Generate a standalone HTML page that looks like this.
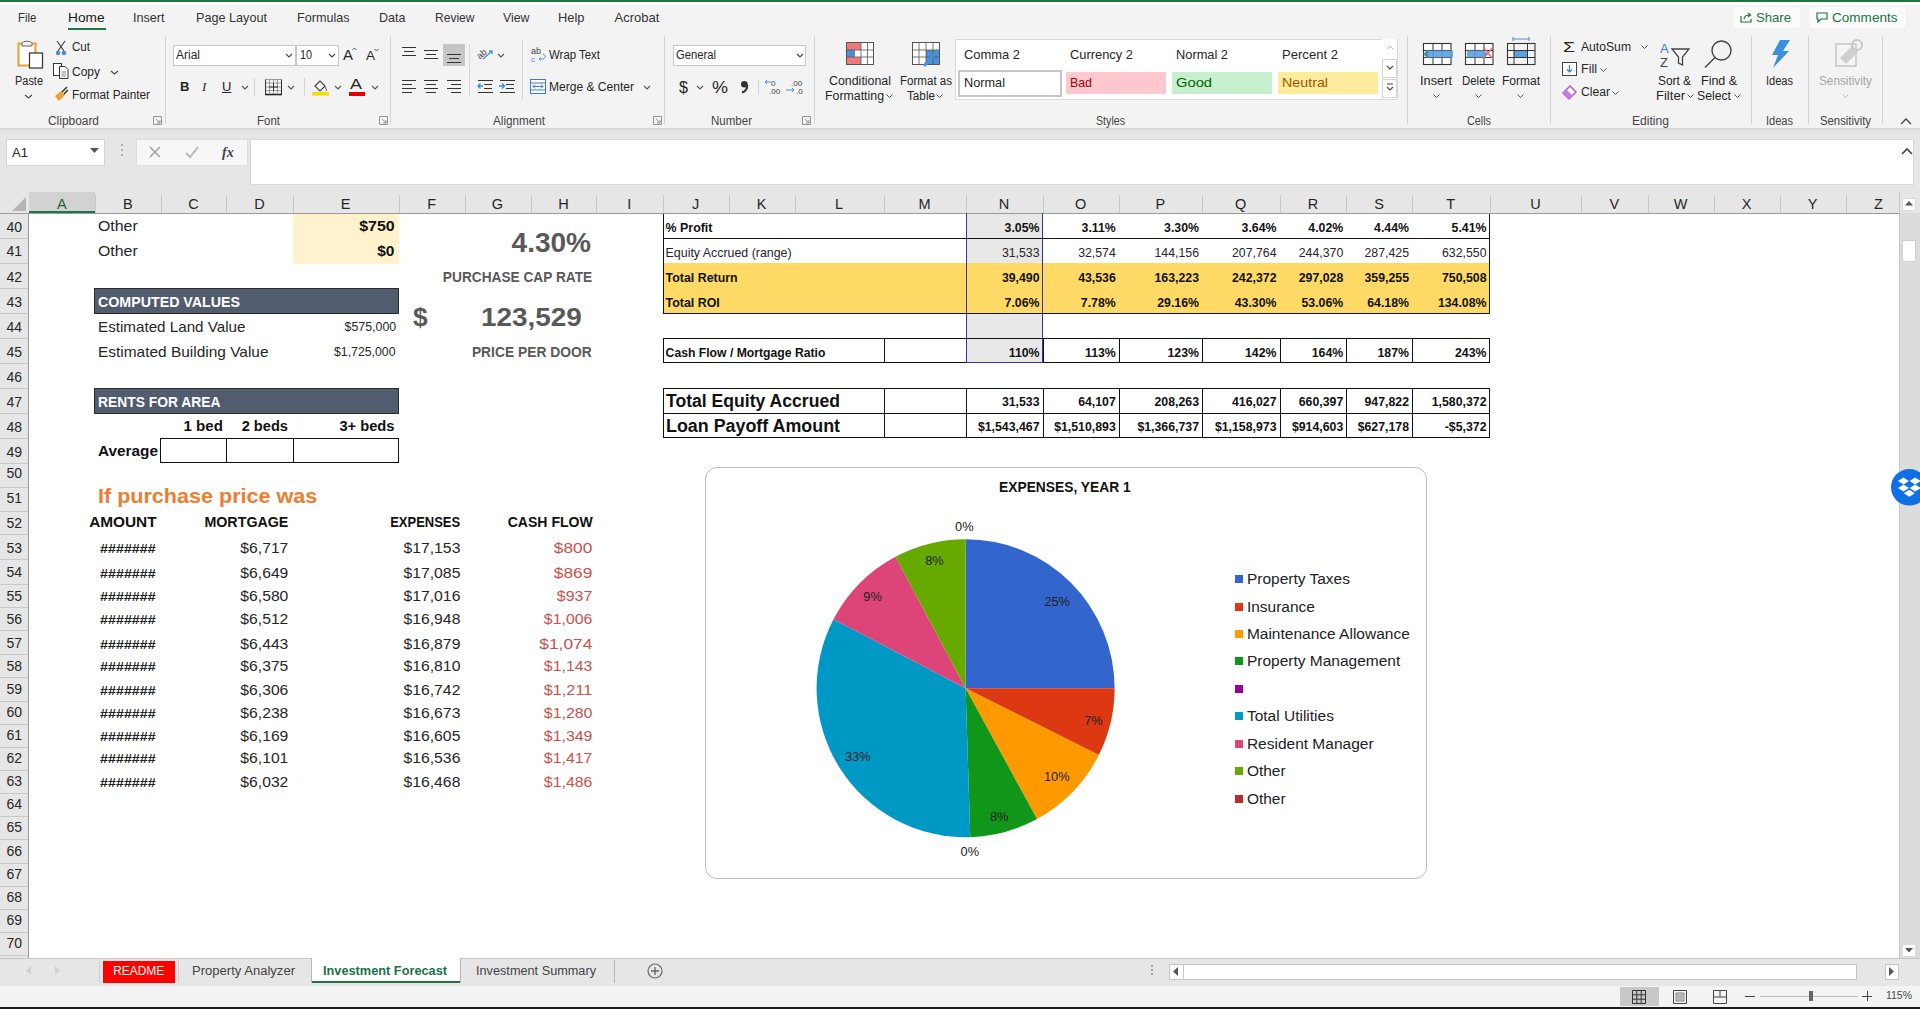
<!DOCTYPE html>
<html><head><meta charset="utf-8"><title>Excel</title>
<style>
html,body{margin:0;padding:0;}
body{width:1920px;height:1009px;position:relative;overflow:hidden;background:#f3f3f3;font-family:"Liberation Sans",sans-serif;}

</style></head><body>
<div style="position:absolute;left:0.00px;top:128.00px;width:1920.00px;height:85.00px;background:#e6e6e6;z-index:1;"></div>
<div style="position:absolute;left:0.00px;top:128.00px;width:1920.00px;height:4.00px;background:linear-gradient(#d6d6d6,#e6e6e6);z-index:1;"></div>
<div style="position:absolute;left:5.50px;top:138.50px;width:99.50px;height:27.00px;background:#fff;border:1px solid #d4d4d4;box-sizing:border-box;z-index:2;"></div>
<div style="position:absolute;left:12.00px;top:145.99px;font:400 13.5px/1 'Liberation Sans',sans-serif;color:#262626;white-space:pre;z-index:5;transform:scaleX(0.9689);transform-origin:left;">A1</div>
<svg style="position:absolute;left:90px;top:148px;z-index:6;overflow:visible" width="10" height="6" viewBox="0 0 10 6"><path d="M0 0 L9 0 L4.5 5 Z" fill="#555"/></svg>
<div style="position:absolute;left:120.50px;top:144.00px;width:2.00px;height:2.00px;background:#b0b0b0;z-index:2;"></div>
<div style="position:absolute;left:120.50px;top:149.00px;width:2.00px;height:2.00px;background:#b0b0b0;z-index:2;"></div>
<div style="position:absolute;left:120.50px;top:154.00px;width:2.00px;height:2.00px;background:#b0b0b0;z-index:2;"></div>
<div style="position:absolute;left:136.00px;top:139.00px;width:112.00px;height:26.50px;background:#f7f7f7;border:1px solid #dedede;box-sizing:border-box;z-index:2;"></div>
<svg style="position:absolute;left:148px;top:145px;z-index:6;overflow:visible" width="14" height="14" viewBox="0 0 14 14"><path d="M2 2 L12 12 M12 2 L2 12" stroke="#a0a0a0" stroke-width="1.5"/></svg>
<svg style="position:absolute;left:184px;top:145px;z-index:6;overflow:visible" width="16" height="14" viewBox="0 0 16 14"><path d="M2 8 L6 12 L14 2" stroke="#b8b8b8" stroke-width="2" fill="none"/></svg>
<div style="position:absolute;left:222.00px;top:145.75px;font:700 14px/1 'Liberation Serif',serif;color:#444;white-space:pre;z-index:5;font-style:italic;">fx</div>
<div style="position:absolute;left:250.00px;top:139.00px;width:1664.00px;height:45.50px;background:#fff;border:1px solid #d8d8d8;box-sizing:border-box;z-index:2;"></div>
<svg style="position:absolute;left:1901px;top:147px;z-index:6;overflow:visible" width="12" height="8" viewBox="0 0 12 8"><path d="M1 7 L6 2 L11 7" stroke="#444" stroke-width="1.6" fill="none"/></svg>
<div style="position:absolute;left:0.00px;top:192.00px;width:1920.00px;height:21.00px;background:#e6e6e6;z-index:2;"></div>
<div style="position:absolute;left:28.50px;top:192.00px;width:66.50px;height:19.00px;background:#d2d2d2;z-index:2;"></div>
<div style="position:absolute;left:28.50px;top:211.00px;width:66.50px;height:2.00px;background:#217346;z-index:4;"></div>
<div style="position:absolute;left:0.00px;top:213.00px;width:1898.75px;height:1.00px;background:#9b9b9b;z-index:4;"></div>
<svg style="position:absolute;left:12px;top:197px;z-index:6;overflow:visible" width="15" height="15" viewBox="0 0 15 15"><path d="M14 0 L14 14 L0 14 Z" fill="#b4b4b4"/></svg>
<div style="position:absolute;left:56.91px;top:197.01px;font:400 14.5px/1 'Liberation Sans',sans-serif;color:#1e5b3a;white-space:pre;z-index:5;">A</div>
<div style="position:absolute;left:95.00px;top:195.00px;width:1.00px;height:18.00px;background:#c8c8c8;z-index:3;"></div>
<div style="position:absolute;left:122.91px;top:197.01px;font:400 14.5px/1 'Liberation Sans',sans-serif;color:#262626;white-space:pre;z-index:5;">B</div>
<div style="position:absolute;left:160.50px;top:195.00px;width:1.00px;height:18.00px;background:#c8c8c8;z-index:3;"></div>
<div style="position:absolute;left:188.14px;top:197.01px;font:400 14.5px/1 'Liberation Sans',sans-serif;color:#262626;white-space:pre;z-index:5;">C</div>
<div style="position:absolute;left:226.25px;top:195.00px;width:1.00px;height:18.00px;background:#c8c8c8;z-index:3;"></div>
<div style="position:absolute;left:254.14px;top:197.01px;font:400 14.5px/1 'Liberation Sans',sans-serif;color:#262626;white-space:pre;z-index:5;">D</div>
<div style="position:absolute;left:292.50px;top:195.00px;width:1.00px;height:18.00px;background:#c8c8c8;z-index:3;"></div>
<div style="position:absolute;left:340.79px;top:197.01px;font:400 14.5px/1 'Liberation Sans',sans-serif;color:#262626;white-space:pre;z-index:5;">E</div>
<div style="position:absolute;left:398.75px;top:195.00px;width:1.00px;height:18.00px;background:#c8c8c8;z-index:3;"></div>
<div style="position:absolute;left:427.20px;top:197.01px;font:400 14.5px/1 'Liberation Sans',sans-serif;color:#262626;white-space:pre;z-index:5;">F</div>
<div style="position:absolute;left:464.50px;top:195.00px;width:1.00px;height:18.00px;background:#c8c8c8;z-index:3;"></div>
<div style="position:absolute;left:491.86px;top:197.01px;font:400 14.5px/1 'Liberation Sans',sans-serif;color:#262626;white-space:pre;z-index:5;">G</div>
<div style="position:absolute;left:530.50px;top:195.00px;width:1.00px;height:18.00px;background:#c8c8c8;z-index:3;"></div>
<div style="position:absolute;left:558.14px;top:197.01px;font:400 14.5px/1 'Liberation Sans',sans-serif;color:#262626;white-space:pre;z-index:5;">H</div>
<div style="position:absolute;left:596.25px;top:195.00px;width:1.00px;height:18.00px;background:#c8c8c8;z-index:3;"></div>
<div style="position:absolute;left:627.36px;top:197.01px;font:400 14.5px/1 'Liberation Sans',sans-serif;color:#262626;white-space:pre;z-index:5;">I</div>
<div style="position:absolute;left:662.50px;top:195.00px;width:1.00px;height:18.00px;background:#c8c8c8;z-index:3;"></div>
<div style="position:absolute;left:692.00px;top:197.01px;font:400 14.5px/1 'Liberation Sans',sans-serif;color:#262626;white-space:pre;z-index:5;">J</div>
<div style="position:absolute;left:728.75px;top:195.00px;width:1.00px;height:18.00px;background:#c8c8c8;z-index:3;"></div>
<div style="position:absolute;left:756.79px;top:197.01px;font:400 14.5px/1 'Liberation Sans',sans-serif;color:#262626;white-space:pre;z-index:5;">K</div>
<div style="position:absolute;left:794.50px;top:195.00px;width:1.00px;height:18.00px;background:#c8c8c8;z-index:3;"></div>
<div style="position:absolute;left:835.09px;top:197.01px;font:400 14.5px/1 'Liberation Sans',sans-serif;color:#262626;white-space:pre;z-index:5;">L</div>
<div style="position:absolute;left:883.75px;top:195.00px;width:1.00px;height:18.00px;background:#c8c8c8;z-index:3;"></div>
<div style="position:absolute;left:918.58px;top:197.01px;font:400 14.5px/1 'Liberation Sans',sans-serif;color:#262626;white-space:pre;z-index:5;">M</div>
<div style="position:absolute;left:965.50px;top:195.00px;width:1.00px;height:18.00px;background:#c8c8c8;z-index:3;"></div>
<div style="position:absolute;left:998.76px;top:197.01px;font:400 14.5px/1 'Liberation Sans',sans-serif;color:#262626;white-space:pre;z-index:5;">N</div>
<div style="position:absolute;left:1042.50px;top:195.00px;width:1.00px;height:18.00px;background:#c8c8c8;z-index:3;"></div>
<div style="position:absolute;left:1074.98px;top:197.01px;font:400 14.5px/1 'Liberation Sans',sans-serif;color:#262626;white-space:pre;z-index:5;">O</div>
<div style="position:absolute;left:1118.75px;top:195.00px;width:1.00px;height:18.00px;background:#c8c8c8;z-index:3;"></div>
<div style="position:absolute;left:1155.54px;top:197.01px;font:400 14.5px/1 'Liberation Sans',sans-serif;color:#262626;white-space:pre;z-index:5;">P</div>
<div style="position:absolute;left:1202.00px;top:195.00px;width:1.00px;height:18.00px;background:#c8c8c8;z-index:3;"></div>
<div style="position:absolute;left:1235.11px;top:197.01px;font:400 14.5px/1 'Liberation Sans',sans-serif;color:#262626;white-space:pre;z-index:5;">Q</div>
<div style="position:absolute;left:1279.50px;top:195.00px;width:1.00px;height:18.00px;background:#c8c8c8;z-index:3;"></div>
<div style="position:absolute;left:1307.64px;top:197.01px;font:400 14.5px/1 'Liberation Sans',sans-serif;color:#262626;white-space:pre;z-index:5;">R</div>
<div style="position:absolute;left:1346.25px;top:195.00px;width:1.00px;height:18.00px;background:#c8c8c8;z-index:3;"></div>
<div style="position:absolute;left:1374.29px;top:197.01px;font:400 14.5px/1 'Liberation Sans',sans-serif;color:#262626;white-space:pre;z-index:5;">S</div>
<div style="position:absolute;left:1412.00px;top:195.00px;width:1.00px;height:18.00px;background:#c8c8c8;z-index:3;"></div>
<div style="position:absolute;left:1446.32px;top:197.01px;font:400 14.5px/1 'Liberation Sans',sans-serif;color:#262626;white-space:pre;z-index:5;">T</div>
<div style="position:absolute;left:1489.50px;top:195.00px;width:1.00px;height:18.00px;background:#c8c8c8;z-index:3;"></div>
<div style="position:absolute;left:1530.14px;top:197.01px;font:400 14.5px/1 'Liberation Sans',sans-serif;color:#262626;white-space:pre;z-index:5;">U</div>
<div style="position:absolute;left:1581.25px;top:195.00px;width:1.00px;height:18.00px;background:#c8c8c8;z-index:3;"></div>
<div style="position:absolute;left:1609.54px;top:197.01px;font:400 14.5px/1 'Liberation Sans',sans-serif;color:#262626;white-space:pre;z-index:5;">V</div>
<div style="position:absolute;left:1647.50px;top:195.00px;width:1.00px;height:18.00px;background:#c8c8c8;z-index:3;"></div>
<div style="position:absolute;left:1673.78px;top:197.01px;font:400 14.5px/1 'Liberation Sans',sans-serif;color:#262626;white-space:pre;z-index:5;">W</div>
<div style="position:absolute;left:1713.75px;top:195.00px;width:1.00px;height:18.00px;background:#c8c8c8;z-index:3;"></div>
<div style="position:absolute;left:1741.79px;top:197.01px;font:400 14.5px/1 'Liberation Sans',sans-serif;color:#262626;white-space:pre;z-index:5;">X</div>
<div style="position:absolute;left:1779.50px;top:195.00px;width:1.00px;height:18.00px;background:#c8c8c8;z-index:3;"></div>
<div style="position:absolute;left:1807.66px;top:197.01px;font:400 14.5px/1 'Liberation Sans',sans-serif;color:#262626;white-space:pre;z-index:5;">Y</div>
<div style="position:absolute;left:1845.50px;top:195.00px;width:1.00px;height:18.00px;background:#c8c8c8;z-index:3;"></div>
<div style="position:absolute;left:1874.07px;top:197.01px;font:400 14.5px/1 'Liberation Sans',sans-serif;color:#262626;white-space:pre;z-index:5;">Z</div>
<div style="position:absolute;left:1898.75px;top:192.00px;width:1.00px;height:21.00px;background:#c8c8c8;z-index:3;"></div>
<div style="position:absolute;left:0.00px;top:213.00px;width:28.50px;height:744.50px;background:#e6e6e6;z-index:2;"></div>
<div style="position:absolute;left:28.00px;top:213.00px;width:1.00px;height:744.50px;background:#9b9b9b;z-index:4;"></div>
<div style="position:absolute;left:0.00px;top:237.80px;width:28.00px;height:1.00px;background:#c8c8c8;z-index:3;"></div>
<div style="position:absolute;left:6.51px;top:219.55px;font:400 14px/1 'Liberation Sans',sans-serif;color:#262626;white-space:pre;z-index:5;">40</div>
<div style="position:absolute;left:0.00px;top:262.70px;width:28.00px;height:1.00px;background:#c8c8c8;z-index:3;"></div>
<div style="position:absolute;left:6.51px;top:244.45px;font:400 14px/1 'Liberation Sans',sans-serif;color:#262626;white-space:pre;z-index:5;">41</div>
<div style="position:absolute;left:0.00px;top:288.10px;width:28.00px;height:1.00px;background:#c8c8c8;z-index:3;"></div>
<div style="position:absolute;left:6.51px;top:269.95px;font:400 14px/1 'Liberation Sans',sans-serif;color:#262626;white-space:pre;z-index:5;">42</div>
<div style="position:absolute;left:0.00px;top:313.00px;width:28.00px;height:1.00px;background:#c8c8c8;z-index:3;"></div>
<div style="position:absolute;left:6.51px;top:294.85px;font:400 14px/1 'Liberation Sans',sans-serif;color:#262626;white-space:pre;z-index:5;">43</div>
<div style="position:absolute;left:0.00px;top:338.10px;width:28.00px;height:1.00px;background:#c8c8c8;z-index:3;"></div>
<div style="position:absolute;left:6.51px;top:320.25px;font:400 14px/1 'Liberation Sans',sans-serif;color:#262626;white-space:pre;z-index:5;">44</div>
<div style="position:absolute;left:0.00px;top:363.00px;width:28.00px;height:1.00px;background:#c8c8c8;z-index:3;"></div>
<div style="position:absolute;left:6.51px;top:344.95px;font:400 14px/1 'Liberation Sans',sans-serif;color:#262626;white-space:pre;z-index:5;">45</div>
<div style="position:absolute;left:0.00px;top:388.10px;width:28.00px;height:1.00px;background:#c8c8c8;z-index:3;"></div>
<div style="position:absolute;left:6.51px;top:369.55px;font:400 14px/1 'Liberation Sans',sans-serif;color:#262626;white-space:pre;z-index:5;">46</div>
<div style="position:absolute;left:0.00px;top:413.10px;width:28.00px;height:1.00px;background:#c8c8c8;z-index:3;"></div>
<div style="position:absolute;left:6.51px;top:394.55px;font:400 14px/1 'Liberation Sans',sans-serif;color:#262626;white-space:pre;z-index:5;">47</div>
<div style="position:absolute;left:0.00px;top:438.10px;width:28.00px;height:1.00px;background:#c8c8c8;z-index:3;"></div>
<div style="position:absolute;left:6.51px;top:419.55px;font:400 14px/1 'Liberation Sans',sans-serif;color:#262626;white-space:pre;z-index:5;">48</div>
<div style="position:absolute;left:0.00px;top:462.90px;width:28.00px;height:1.00px;background:#c8c8c8;z-index:3;"></div>
<div style="position:absolute;left:6.51px;top:444.55px;font:400 14px/1 'Liberation Sans',sans-serif;color:#262626;white-space:pre;z-index:5;">49</div>
<div style="position:absolute;left:0.00px;top:486.60px;width:28.00px;height:1.00px;background:#c8c8c8;z-index:3;"></div>
<div style="position:absolute;left:6.51px;top:466.15px;font:400 14px/1 'Liberation Sans',sans-serif;color:#262626;white-space:pre;z-index:5;">50</div>
<div style="position:absolute;left:0.00px;top:510.50px;width:28.00px;height:1.00px;background:#c8c8c8;z-index:3;"></div>
<div style="position:absolute;left:6.51px;top:491.15px;font:400 14px/1 'Liberation Sans',sans-serif;color:#262626;white-space:pre;z-index:5;">51</div>
<div style="position:absolute;left:0.00px;top:533.70px;width:28.00px;height:1.00px;background:#c8c8c8;z-index:3;"></div>
<div style="position:absolute;left:6.51px;top:515.75px;font:400 14px/1 'Liberation Sans',sans-serif;color:#262626;white-space:pre;z-index:5;">52</div>
<div style="position:absolute;left:0.00px;top:558.70px;width:28.00px;height:1.00px;background:#c8c8c8;z-index:3;"></div>
<div style="position:absolute;left:6.51px;top:540.75px;font:400 14px/1 'Liberation Sans',sans-serif;color:#262626;white-space:pre;z-index:5;">53</div>
<div style="position:absolute;left:0.00px;top:583.80px;width:28.00px;height:1.00px;background:#c8c8c8;z-index:3;"></div>
<div style="position:absolute;left:6.51px;top:565.25px;font:400 14px/1 'Liberation Sans',sans-serif;color:#262626;white-space:pre;z-index:5;">54</div>
<div style="position:absolute;left:0.00px;top:606.80px;width:28.00px;height:1.00px;background:#c8c8c8;z-index:3;"></div>
<div style="position:absolute;left:6.51px;top:588.65px;font:400 14px/1 'Liberation Sans',sans-serif;color:#262626;white-space:pre;z-index:5;">55</div>
<div style="position:absolute;left:0.00px;top:629.80px;width:28.00px;height:1.00px;background:#c8c8c8;z-index:3;"></div>
<div style="position:absolute;left:6.51px;top:611.75px;font:400 14px/1 'Liberation Sans',sans-serif;color:#262626;white-space:pre;z-index:5;">56</div>
<div style="position:absolute;left:0.00px;top:654.40px;width:28.00px;height:1.00px;background:#c8c8c8;z-index:3;"></div>
<div style="position:absolute;left:6.51px;top:636.25px;font:400 14px/1 'Liberation Sans',sans-serif;color:#262626;white-space:pre;z-index:5;">57</div>
<div style="position:absolute;left:0.00px;top:677.40px;width:28.00px;height:1.00px;background:#c8c8c8;z-index:3;"></div>
<div style="position:absolute;left:6.51px;top:659.25px;font:400 14px/1 'Liberation Sans',sans-serif;color:#262626;white-space:pre;z-index:5;">58</div>
<div style="position:absolute;left:0.00px;top:700.50px;width:28.00px;height:1.00px;background:#c8c8c8;z-index:3;"></div>
<div style="position:absolute;left:6.51px;top:682.25px;font:400 14px/1 'Liberation Sans',sans-serif;color:#262626;white-space:pre;z-index:5;">59</div>
<div style="position:absolute;left:0.00px;top:724.30px;width:28.00px;height:1.00px;background:#c8c8c8;z-index:3;"></div>
<div style="position:absolute;left:6.51px;top:705.25px;font:400 14px/1 'Liberation Sans',sans-serif;color:#262626;white-space:pre;z-index:5;">60</div>
<div style="position:absolute;left:0.00px;top:747.30px;width:28.00px;height:1.00px;background:#c8c8c8;z-index:3;"></div>
<div style="position:absolute;left:6.51px;top:728.25px;font:400 14px/1 'Liberation Sans',sans-serif;color:#262626;white-space:pre;z-index:5;">61</div>
<div style="position:absolute;left:0.00px;top:770.00px;width:28.00px;height:1.00px;background:#c8c8c8;z-index:3;"></div>
<div style="position:absolute;left:6.51px;top:751.35px;font:400 14px/1 'Liberation Sans',sans-serif;color:#262626;white-space:pre;z-index:5;">62</div>
<div style="position:absolute;left:0.00px;top:792.80px;width:28.00px;height:1.00px;background:#c8c8c8;z-index:3;"></div>
<div style="position:absolute;left:6.51px;top:774.35px;font:400 14px/1 'Liberation Sans',sans-serif;color:#262626;white-space:pre;z-index:5;">63</div>
<div style="position:absolute;left:0.00px;top:815.50px;width:28.00px;height:1.00px;background:#c8c8c8;z-index:3;"></div>
<div style="position:absolute;left:6.51px;top:797.35px;font:400 14px/1 'Liberation Sans',sans-serif;color:#262626;white-space:pre;z-index:5;">64</div>
<div style="position:absolute;left:0.00px;top:839.40px;width:28.00px;height:1.00px;background:#c8c8c8;z-index:3;"></div>
<div style="position:absolute;left:6.51px;top:819.55px;font:400 14px/1 'Liberation Sans',sans-serif;color:#262626;white-space:pre;z-index:5;">65</div>
<div style="position:absolute;left:0.00px;top:862.60px;width:28.00px;height:1.00px;background:#c8c8c8;z-index:3;"></div>
<div style="position:absolute;left:6.51px;top:843.95px;font:400 14px/1 'Liberation Sans',sans-serif;color:#262626;white-space:pre;z-index:5;">66</div>
<div style="position:absolute;left:0.00px;top:885.80px;width:28.00px;height:1.00px;background:#c8c8c8;z-index:3;"></div>
<div style="position:absolute;left:6.51px;top:867.05px;font:400 14px/1 'Liberation Sans',sans-serif;color:#262626;white-space:pre;z-index:5;">67</div>
<div style="position:absolute;left:0.00px;top:908.90px;width:28.00px;height:1.00px;background:#c8c8c8;z-index:3;"></div>
<div style="position:absolute;left:6.51px;top:889.95px;font:400 14px/1 'Liberation Sans',sans-serif;color:#262626;white-space:pre;z-index:5;">68</div>
<div style="position:absolute;left:0.00px;top:931.90px;width:28.00px;height:1.00px;background:#c8c8c8;z-index:3;"></div>
<div style="position:absolute;left:6.51px;top:912.95px;font:400 14px/1 'Liberation Sans',sans-serif;color:#262626;white-space:pre;z-index:5;">69</div>
<div style="position:absolute;left:0.00px;top:954.90px;width:28.00px;height:1.00px;background:#c8c8c8;z-index:3;"></div>
<div style="position:absolute;left:6.51px;top:935.95px;font:400 14px/1 'Liberation Sans',sans-serif;color:#262626;white-space:pre;z-index:5;">70</div>
<div style="position:absolute;left:28.50px;top:213.50px;width:1870.25px;height:744.00px;background:#fff;z-index:1;"></div>
<div style="position:absolute;left:1898.75px;top:192.00px;width:21.25px;height:765.50px;background:#dcdcdc;z-index:2;"></div>
<div style="position:absolute;left:1898.75px;top:192.00px;width:21.25px;height:21.00px;background:#e6e6e6;z-index:2;"></div>
<div style="position:absolute;left:1898.75px;top:213.00px;width:1.00px;height:744.50px;background:#c6c6c6;z-index:3;"></div>
<div style="position:absolute;left:1902.00px;top:197.50px;width:14.00px;height:13.50px;background:#fff;border:1px solid #dcdcdc;box-sizing:border-box;z-index:3;"></div>
<svg style="position:absolute;left:1905px;top:201px;z-index:6;overflow:visible" width="8" height="5" viewBox="0 0 8 5"><path d="M0 4.5 L4 0 L8 4.5 Z" fill="#555"/></svg>
<div style="position:absolute;left:1902.00px;top:240.00px;width:14.00px;height:22.00px;background:#fff;border:1px solid #d0d0d0;box-sizing:border-box;z-index:3;"></div>
<div style="position:absolute;left:1902.00px;top:944.00px;width:14.00px;height:13.00px;background:#fff;border:1px solid #dcdcdc;box-sizing:border-box;z-index:3;"></div>
<svg style="position:absolute;left:1905px;top:948px;z-index:6;overflow:visible" width="8" height="5" viewBox="0 0 8 5"><path d="M0 0 L8 0 L4 4.5 Z" fill="#555"/></svg>
<div style="position:absolute;left:292.50px;top:213.50px;width:106.25px;height:50.00px;background:#fff2cc;z-index:2;"></div>
<div style="position:absolute;left:98.30px;top:220.05px;font:400 13.8px/1 'Liberation Sans',sans-serif;color:#262626;white-space:pre;z-index:5;transform:scaleX(1.1502);transform-origin:left;">Other</div>
<div style="position:absolute;left:98.30px;top:245.35px;font:400 13.8px/1 'Liberation Sans',sans-serif;color:#262626;white-space:pre;z-index:5;transform:scaleX(1.1502);transform-origin:left;">Other</div>
<div style="position:absolute;left:364.00px;top:220.05px;font:700 13.8px/1 'Liberation Sans',sans-serif;color:#111;white-space:pre;z-index:5;transform:scaleX(1.1563);transform-origin:right;">$750</div>
<div style="position:absolute;left:379.35px;top:245.35px;font:700 13.8px/1 'Liberation Sans',sans-serif;color:#111;white-space:pre;z-index:5;transform:scaleX(1.1205);transform-origin:right;">$0</div>
<div style="position:absolute;left:513.22px;top:228.65px;font:700 27.5px/1 'Liberation Sans',sans-serif;color:#595959;white-space:pre;z-index:5;transform:scaleX(1.0183);transform-origin:right;">4.30%</div>
<div style="position:absolute;left:433.82px;top:269.51px;font:700 14.5px/1 'Liberation Sans',sans-serif;color:#595959;white-space:pre;z-index:5;transform:scaleX(0.9439);transform-origin:right;">PURCHASE CAP RATE</div>
<div style="position:absolute;left:413.00px;top:304.47px;font:700 26px/1 'Liberation Sans',sans-serif;color:#595959;white-space:pre;z-index:5;transform:scaleX(1.0095);transform-origin:left;">$</div>
<div style="position:absolute;left:486.21px;top:304.03px;font:700 26.5px/1 'Liberation Sans',sans-serif;color:#595959;white-space:pre;z-index:5;transform:scaleX(1.0533);transform-origin:right;">123,529</div>
<div style="position:absolute;left:466.31px;top:344.51px;font:700 14.5px/1 'Liberation Sans',sans-serif;color:#595959;white-space:pre;z-index:5;transform:scaleX(0.9532);transform-origin:right;">PRICE PER DOOR</div>
<div style="position:absolute;left:94.20px;top:288.00px;width:305.00px;height:25.70px;background:#515c6e;border:1px solid #2b2b2b;box-sizing:border-box;z-index:3;"></div>
<div style="position:absolute;left:98.30px;top:294.71px;font:700 14.5px/1 'Liberation Sans',sans-serif;color:#fff;white-space:pre;z-index:6;transform:scaleX(0.9811);transform-origin:left;">COMPUTED VALUES</div>
<div style="position:absolute;left:98.30px;top:319.71px;font:400 14.5px/1 'Liberation Sans',sans-serif;color:#262626;white-space:pre;z-index:5;transform:scaleX(1.0476);transform-origin:left;">Estimated Land Value</div>
<div style="position:absolute;left:343.66px;top:321.48px;font:400 12.5px/1 'Liberation Sans',sans-serif;color:#262626;white-space:pre;z-index:5;transform:scaleX(0.9897);transform-origin:right;">$575,000</div>
<div style="position:absolute;left:98.30px;top:344.71px;font:400 14.5px/1 'Liberation Sans',sans-serif;color:#262626;white-space:pre;z-index:5;transform:scaleX(1.0647);transform-origin:left;">Estimated Building Value</div>
<div style="position:absolute;left:333.24px;top:345.98px;font:400 12.5px/1 'Liberation Sans',sans-serif;color:#262626;white-space:pre;z-index:5;transform:scaleX(0.9846);transform-origin:right;">$1,725,000</div>
<div style="position:absolute;left:94.20px;top:388.00px;width:304.50px;height:25.70px;background:#515c6e;border:1px solid #2b2b2b;box-sizing:border-box;z-index:3;"></div>
<div style="position:absolute;left:98.30px;top:394.71px;font:700 14.5px/1 'Liberation Sans',sans-serif;color:#fff;white-space:pre;z-index:6;transform:scaleX(0.9544);transform-origin:left;">RENTS FOR AREA</div>
<div style="position:absolute;left:185.13px;top:419.21px;font:700 14.5px/1 'Liberation Sans',sans-serif;color:#111;white-space:pre;z-index:5;transform:scaleX(1.0377);transform-origin:right;">1 bed</div>
<div style="position:absolute;left:242.36px;top:419.21px;font:700 14.5px/1 'Liberation Sans',sans-serif;color:#111;white-space:pre;z-index:5;transform:scaleX(1.0079);transform-origin:right;">2 beds</div>
<div style="position:absolute;left:339.80px;top:419.21px;font:700 14.5px/1 'Liberation Sans',sans-serif;color:#111;white-space:pre;z-index:5;transform:scaleX(1.0109);transform-origin:right;">3+ beds</div>
<div style="position:absolute;left:160.30px;top:438.30px;width:238.40px;height:25.00px;background:transparent;border:1px solid #111;box-sizing:border-box;z-index:3;"></div>
<div style="position:absolute;left:226.30px;top:438.30px;width:1.00px;height:25.00px;background:#111;z-index:3;"></div>
<div style="position:absolute;left:292.50px;top:438.30px;width:1.00px;height:25.00px;background:#111;z-index:3;"></div>
<div style="position:absolute;left:98.30px;top:444.21px;font:700 14.5px/1 'Liberation Sans',sans-serif;color:#111;white-space:pre;z-index:5;transform:scaleX(1.0584);transform-origin:left;">Average</div>
<div style="position:absolute;left:98.30px;top:485.38px;font:700 21px/1 'Liberation Sans',sans-serif;color:#ed7d31;white-space:pre;z-index:5;transform:scaleX(1.0263);transform-origin:left;">If purchase price was</div>
<div style="position:absolute;left:93.07px;top:515.41px;font:700 14.5px/1 'Liberation Sans',sans-serif;color:#111;white-space:pre;z-index:5;transform:scaleX(1.0608);transform-origin:right;">AMOUNT</div>
<div style="position:absolute;left:203.31px;top:515.41px;font:700 14.5px/1 'Liberation Sans',sans-serif;color:#111;white-space:pre;z-index:5;transform:scaleX(0.9838);transform-origin:right;">MORTGAGE</div>
<div style="position:absolute;left:382.43px;top:515.41px;font:700 14.5px/1 'Liberation Sans',sans-serif;color:#111;white-space:pre;z-index:5;transform:scaleX(0.8954);transform-origin:right;">EXPENSES</div>
<div style="position:absolute;left:504.91px;top:515.41px;font:700 14.5px/1 'Liberation Sans',sans-serif;color:#111;white-space:pre;z-index:5;transform:scaleX(0.9693);transform-origin:right;">CASH FLOW</div>
<div style="position:absolute;left:105.19px;top:541.83px;font:700 13px/1 'Liberation Sans',sans-serif;color:#222;white-space:pre;z-index:5;transform:scaleX(1.0966);transform-origin:right;">#######</div>
<div style="position:absolute;left:243.95px;top:540.81px;font:400 14.5px/1 'Liberation Sans',sans-serif;color:#262626;white-space:pre;z-index:5;transform:scaleX(1.0823);transform-origin:right;">$6,717</div>
<div style="position:absolute;left:408.18px;top:540.81px;font:400 14.5px/1 'Liberation Sans',sans-serif;color:#262626;white-space:pre;z-index:5;transform:scaleX(1.0875);transform-origin:right;">$17,153</div>
<div style="position:absolute;left:560.24px;top:540.81px;font:400 14.5px/1 'Liberation Sans',sans-serif;color:#c9514d;white-space:pre;z-index:5;transform:scaleX(1.1935);transform-origin:right;">$800</div>
<div style="position:absolute;left:105.19px;top:566.53px;font:700 13px/1 'Liberation Sans',sans-serif;color:#222;white-space:pre;z-index:5;transform:scaleX(1.0966);transform-origin:right;">#######</div>
<div style="position:absolute;left:243.95px;top:565.51px;font:400 14.5px/1 'Liberation Sans',sans-serif;color:#262626;white-space:pre;z-index:5;transform:scaleX(1.0823);transform-origin:right;">$6,649</div>
<div style="position:absolute;left:408.18px;top:565.51px;font:400 14.5px/1 'Liberation Sans',sans-serif;color:#262626;white-space:pre;z-index:5;transform:scaleX(1.0875);transform-origin:right;">$17,085</div>
<div style="position:absolute;left:560.24px;top:565.51px;font:400 14.5px/1 'Liberation Sans',sans-serif;color:#c9514d;white-space:pre;z-index:5;transform:scaleX(1.1935);transform-origin:right;">$869</div>
<div style="position:absolute;left:105.19px;top:589.83px;font:700 13px/1 'Liberation Sans',sans-serif;color:#222;white-space:pre;z-index:5;transform:scaleX(1.0966);transform-origin:right;">#######</div>
<div style="position:absolute;left:243.95px;top:588.81px;font:400 14.5px/1 'Liberation Sans',sans-serif;color:#262626;white-space:pre;z-index:5;transform:scaleX(1.0823);transform-origin:right;">$6,580</div>
<div style="position:absolute;left:408.18px;top:588.81px;font:400 14.5px/1 'Liberation Sans',sans-serif;color:#262626;white-space:pre;z-index:5;transform:scaleX(1.0875);transform-origin:right;">$17,016</div>
<div style="position:absolute;left:560.24px;top:588.81px;font:400 14.5px/1 'Liberation Sans',sans-serif;color:#c9514d;white-space:pre;z-index:5;transform:scaleX(1.1005);transform-origin:right;">$937</div>
<div style="position:absolute;left:105.19px;top:612.53px;font:700 13px/1 'Liberation Sans',sans-serif;color:#222;white-space:pre;z-index:5;transform:scaleX(1.0966);transform-origin:right;">#######</div>
<div style="position:absolute;left:243.95px;top:611.51px;font:400 14.5px/1 'Liberation Sans',sans-serif;color:#262626;white-space:pre;z-index:5;transform:scaleX(1.0823);transform-origin:right;">$6,512</div>
<div style="position:absolute;left:408.18px;top:611.51px;font:400 14.5px/1 'Liberation Sans',sans-serif;color:#262626;white-space:pre;z-index:5;transform:scaleX(1.0875);transform-origin:right;">$16,948</div>
<div style="position:absolute;left:548.15px;top:611.51px;font:400 14.5px/1 'Liberation Sans',sans-serif;color:#c9514d;white-space:pre;z-index:5;transform:scaleX(1.0936);transform-origin:right;">$1,006</div>
<div style="position:absolute;left:105.19px;top:637.53px;font:700 13px/1 'Liberation Sans',sans-serif;color:#222;white-space:pre;z-index:5;transform:scaleX(1.0966);transform-origin:right;">#######</div>
<div style="position:absolute;left:243.95px;top:636.51px;font:400 14.5px/1 'Liberation Sans',sans-serif;color:#262626;white-space:pre;z-index:5;transform:scaleX(1.0823);transform-origin:right;">$6,443</div>
<div style="position:absolute;left:408.18px;top:636.51px;font:400 14.5px/1 'Liberation Sans',sans-serif;color:#262626;white-space:pre;z-index:5;transform:scaleX(1.0875);transform-origin:right;">$16,879</div>
<div style="position:absolute;left:548.15px;top:636.51px;font:400 14.5px/1 'Liberation Sans',sans-serif;color:#c9514d;white-space:pre;z-index:5;transform:scaleX(1.1950);transform-origin:right;">$1,074</div>
<div style="position:absolute;left:105.19px;top:660.33px;font:700 13px/1 'Liberation Sans',sans-serif;color:#222;white-space:pre;z-index:5;transform:scaleX(1.0966);transform-origin:right;">#######</div>
<div style="position:absolute;left:243.95px;top:659.31px;font:400 14.5px/1 'Liberation Sans',sans-serif;color:#262626;white-space:pre;z-index:5;transform:scaleX(1.0823);transform-origin:right;">$6,375</div>
<div style="position:absolute;left:408.18px;top:659.31px;font:400 14.5px/1 'Liberation Sans',sans-serif;color:#262626;white-space:pre;z-index:5;transform:scaleX(1.0875);transform-origin:right;">$16,810</div>
<div style="position:absolute;left:548.15px;top:659.31px;font:400 14.5px/1 'Liberation Sans',sans-serif;color:#c9514d;white-space:pre;z-index:5;transform:scaleX(1.0936);transform-origin:right;">$1,143</div>
<div style="position:absolute;left:105.19px;top:683.63px;font:700 13px/1 'Liberation Sans',sans-serif;color:#222;white-space:pre;z-index:5;transform:scaleX(1.0966);transform-origin:right;">#######</div>
<div style="position:absolute;left:243.95px;top:682.61px;font:400 14.5px/1 'Liberation Sans',sans-serif;color:#262626;white-space:pre;z-index:5;transform:scaleX(1.0823);transform-origin:right;">$6,306</div>
<div style="position:absolute;left:408.18px;top:682.61px;font:400 14.5px/1 'Liberation Sans',sans-serif;color:#262626;white-space:pre;z-index:5;transform:scaleX(1.0875);transform-origin:right;">$16,742</div>
<div style="position:absolute;left:549.23px;top:682.61px;font:400 14.5px/1 'Liberation Sans',sans-serif;color:#c9514d;white-space:pre;z-index:5;transform:scaleX(1.1208);transform-origin:right;">$1,211</div>
<div style="position:absolute;left:105.19px;top:706.73px;font:700 13px/1 'Liberation Sans',sans-serif;color:#222;white-space:pre;z-index:5;transform:scaleX(1.0966);transform-origin:right;">#######</div>
<div style="position:absolute;left:243.95px;top:705.71px;font:400 14.5px/1 'Liberation Sans',sans-serif;color:#262626;white-space:pre;z-index:5;transform:scaleX(1.0823);transform-origin:right;">$6,238</div>
<div style="position:absolute;left:408.18px;top:705.71px;font:400 14.5px/1 'Liberation Sans',sans-serif;color:#262626;white-space:pre;z-index:5;transform:scaleX(1.0875);transform-origin:right;">$16,673</div>
<div style="position:absolute;left:548.15px;top:705.71px;font:400 14.5px/1 'Liberation Sans',sans-serif;color:#c9514d;white-space:pre;z-index:5;transform:scaleX(1.0936);transform-origin:right;">$1,280</div>
<div style="position:absolute;left:105.19px;top:729.73px;font:700 13px/1 'Liberation Sans',sans-serif;color:#222;white-space:pre;z-index:5;transform:scaleX(1.0966);transform-origin:right;">#######</div>
<div style="position:absolute;left:243.95px;top:728.71px;font:400 14.5px/1 'Liberation Sans',sans-serif;color:#262626;white-space:pre;z-index:5;transform:scaleX(1.0823);transform-origin:right;">$6,169</div>
<div style="position:absolute;left:408.18px;top:728.71px;font:400 14.5px/1 'Liberation Sans',sans-serif;color:#262626;white-space:pre;z-index:5;transform:scaleX(1.0875);transform-origin:right;">$16,605</div>
<div style="position:absolute;left:548.15px;top:728.71px;font:400 14.5px/1 'Liberation Sans',sans-serif;color:#c9514d;white-space:pre;z-index:5;transform:scaleX(1.0936);transform-origin:right;">$1,349</div>
<div style="position:absolute;left:105.19px;top:752.43px;font:700 13px/1 'Liberation Sans',sans-serif;color:#222;white-space:pre;z-index:5;transform:scaleX(1.0966);transform-origin:right;">#######</div>
<div style="position:absolute;left:243.95px;top:751.41px;font:400 14.5px/1 'Liberation Sans',sans-serif;color:#262626;white-space:pre;z-index:5;transform:scaleX(1.0823);transform-origin:right;">$6,101</div>
<div style="position:absolute;left:408.18px;top:751.41px;font:400 14.5px/1 'Liberation Sans',sans-serif;color:#262626;white-space:pre;z-index:5;transform:scaleX(1.0875);transform-origin:right;">$16,536</div>
<div style="position:absolute;left:548.15px;top:751.41px;font:400 14.5px/1 'Liberation Sans',sans-serif;color:#c9514d;white-space:pre;z-index:5;transform:scaleX(1.0936);transform-origin:right;">$1,417</div>
<div style="position:absolute;left:105.19px;top:775.63px;font:700 13px/1 'Liberation Sans',sans-serif;color:#222;white-space:pre;z-index:5;transform:scaleX(1.0966);transform-origin:right;">#######</div>
<div style="position:absolute;left:243.95px;top:774.61px;font:400 14.5px/1 'Liberation Sans',sans-serif;color:#262626;white-space:pre;z-index:5;transform:scaleX(1.0823);transform-origin:right;">$6,032</div>
<div style="position:absolute;left:408.18px;top:774.61px;font:400 14.5px/1 'Liberation Sans',sans-serif;color:#262626;white-space:pre;z-index:5;transform:scaleX(1.0875);transform-origin:right;">$16,468</div>
<div style="position:absolute;left:548.15px;top:774.61px;font:400 14.5px/1 'Liberation Sans',sans-serif;color:#c9514d;white-space:pre;z-index:5;transform:scaleX(1.0936);transform-origin:right;">$1,486</div>
<div style="position:absolute;left:965.50px;top:213.50px;width:77.00px;height:49.50px;background:#e8e8e8;z-index:2;"></div>
<div style="position:absolute;left:662.50px;top:263.00px;width:827.00px;height:50.00px;background:#ffd966;z-index:2;"></div>
<div style="position:absolute;left:965.50px;top:313.00px;width:77.00px;height:50.00px;background:#e8e8e8;z-index:2;"></div>
<div style="position:absolute;left:662.50px;top:213.00px;width:1.00px;height:100.50px;background:#111;z-index:3;"></div>
<div style="position:absolute;left:1489.00px;top:213.00px;width:1.00px;height:100.50px;background:#111;z-index:3;"></div>
<div style="position:absolute;left:662.50px;top:238.00px;width:827.50px;height:1.00px;background:#111;z-index:3;"></div>
<div style="position:absolute;left:662.50px;top:312.50px;width:827.50px;height:1.00px;background:#111;z-index:3;"></div>
<div style="position:absolute;left:665.60px;top:221.82px;font:700 12.4px/1 'Liberation Sans',sans-serif;color:#111;white-space:pre;z-index:5;">% Profit</div>
<div style="position:absolute;left:1004.62px;top:221.87px;font:700 12.3px/1 'Liberation Sans',sans-serif;color:#111;white-space:pre;z-index:5;">3.05%</div>
<div style="position:absolute;left:1081.55px;top:221.87px;font:700 12.3px/1 'Liberation Sans',sans-serif;color:#111;white-space:pre;z-index:5;">3.11%</div>
<div style="position:absolute;left:1164.12px;top:221.87px;font:700 12.3px/1 'Liberation Sans',sans-serif;color:#111;white-space:pre;z-index:5;">3.30%</div>
<div style="position:absolute;left:1241.62px;top:221.87px;font:700 12.3px/1 'Liberation Sans',sans-serif;color:#111;white-space:pre;z-index:5;">3.64%</div>
<div style="position:absolute;left:1308.37px;top:221.87px;font:700 12.3px/1 'Liberation Sans',sans-serif;color:#111;white-space:pre;z-index:5;">4.02%</div>
<div style="position:absolute;left:1374.12px;top:221.87px;font:700 12.3px/1 'Liberation Sans',sans-serif;color:#111;white-space:pre;z-index:5;">4.44%</div>
<div style="position:absolute;left:1451.62px;top:221.87px;font:700 12.3px/1 'Liberation Sans',sans-serif;color:#111;white-space:pre;z-index:5;">5.41%</div>
<div style="position:absolute;left:665.60px;top:246.82px;font:400 12.4px/1 'Liberation Sans',sans-serif;color:#262626;white-space:pre;z-index:5;">Equity Accrued (range)</div>
<div style="position:absolute;left:1001.88px;top:246.87px;font:400 12.3px/1 'Liberation Sans',sans-serif;color:#262626;white-space:pre;z-index:5;">31,533</div>
<div style="position:absolute;left:1078.13px;top:246.87px;font:400 12.3px/1 'Liberation Sans',sans-serif;color:#262626;white-space:pre;z-index:5;">32,574</div>
<div style="position:absolute;left:1154.54px;top:246.87px;font:400 12.3px/1 'Liberation Sans',sans-serif;color:#262626;white-space:pre;z-index:5;">144,156</div>
<div style="position:absolute;left:1232.04px;top:246.87px;font:400 12.3px/1 'Liberation Sans',sans-serif;color:#262626;white-space:pre;z-index:5;">207,764</div>
<div style="position:absolute;left:1298.79px;top:246.87px;font:400 12.3px/1 'Liberation Sans',sans-serif;color:#262626;white-space:pre;z-index:5;">244,370</div>
<div style="position:absolute;left:1364.54px;top:246.87px;font:400 12.3px/1 'Liberation Sans',sans-serif;color:#262626;white-space:pre;z-index:5;">287,425</div>
<div style="position:absolute;left:1442.04px;top:246.87px;font:400 12.3px/1 'Liberation Sans',sans-serif;color:#262626;white-space:pre;z-index:5;">632,550</div>
<div style="position:absolute;left:665.60px;top:271.82px;font:700 12.4px/1 'Liberation Sans',sans-serif;color:#111;white-space:pre;z-index:5;">Total Return</div>
<div style="position:absolute;left:1001.88px;top:271.87px;font:700 12.3px/1 'Liberation Sans',sans-serif;color:#111;white-space:pre;z-index:5;">39,490</div>
<div style="position:absolute;left:1078.13px;top:271.87px;font:700 12.3px/1 'Liberation Sans',sans-serif;color:#111;white-space:pre;z-index:5;">43,536</div>
<div style="position:absolute;left:1154.54px;top:271.87px;font:700 12.3px/1 'Liberation Sans',sans-serif;color:#111;white-space:pre;z-index:5;">163,223</div>
<div style="position:absolute;left:1232.04px;top:271.87px;font:700 12.3px/1 'Liberation Sans',sans-serif;color:#111;white-space:pre;z-index:5;">242,372</div>
<div style="position:absolute;left:1298.79px;top:271.87px;font:700 12.3px/1 'Liberation Sans',sans-serif;color:#111;white-space:pre;z-index:5;">297,028</div>
<div style="position:absolute;left:1364.54px;top:271.87px;font:700 12.3px/1 'Liberation Sans',sans-serif;color:#111;white-space:pre;z-index:5;">359,255</div>
<div style="position:absolute;left:1442.04px;top:271.87px;font:700 12.3px/1 'Liberation Sans',sans-serif;color:#111;white-space:pre;z-index:5;">750,508</div>
<div style="position:absolute;left:665.60px;top:296.82px;font:700 12.4px/1 'Liberation Sans',sans-serif;color:#111;white-space:pre;z-index:5;">Total ROI</div>
<div style="position:absolute;left:1004.62px;top:296.87px;font:700 12.3px/1 'Liberation Sans',sans-serif;color:#111;white-space:pre;z-index:5;">7.06%</div>
<div style="position:absolute;left:1080.87px;top:296.87px;font:700 12.3px/1 'Liberation Sans',sans-serif;color:#111;white-space:pre;z-index:5;">7.78%</div>
<div style="position:absolute;left:1157.28px;top:296.87px;font:700 12.3px/1 'Liberation Sans',sans-serif;color:#111;white-space:pre;z-index:5;">29.16%</div>
<div style="position:absolute;left:1234.78px;top:296.87px;font:700 12.3px/1 'Liberation Sans',sans-serif;color:#111;white-space:pre;z-index:5;">43.30%</div>
<div style="position:absolute;left:1301.53px;top:296.87px;font:700 12.3px/1 'Liberation Sans',sans-serif;color:#111;white-space:pre;z-index:5;">53.06%</div>
<div style="position:absolute;left:1367.28px;top:296.87px;font:700 12.3px/1 'Liberation Sans',sans-serif;color:#111;white-space:pre;z-index:5;">64.18%</div>
<div style="position:absolute;left:1437.94px;top:296.87px;font:700 12.3px/1 'Liberation Sans',sans-serif;color:#111;white-space:pre;z-index:5;">134.08%</div>
<div style="position:absolute;left:662.50px;top:338.40px;width:827.50px;height:1.00px;background:#111;z-index:3;"></div>
<div style="position:absolute;left:662.50px;top:362.40px;width:827.50px;height:1.00px;background:#111;z-index:3;"></div>
<div style="position:absolute;left:662.50px;top:338.40px;width:1.00px;height:25.00px;background:#111;z-index:3;"></div>
<div style="position:absolute;left:883.60px;top:338.40px;width:1.00px;height:25.00px;background:#111;z-index:3;"></div>
<div style="position:absolute;left:965.50px;top:338.40px;width:1.00px;height:25.00px;background:#111;z-index:3;"></div>
<div style="position:absolute;left:1042.50px;top:338.40px;width:1.00px;height:25.00px;background:#111;z-index:3;"></div>
<div style="position:absolute;left:1118.75px;top:338.40px;width:1.00px;height:25.00px;background:#111;z-index:3;"></div>
<div style="position:absolute;left:1202.00px;top:338.40px;width:1.00px;height:25.00px;background:#111;z-index:3;"></div>
<div style="position:absolute;left:1279.50px;top:338.40px;width:1.00px;height:25.00px;background:#111;z-index:3;"></div>
<div style="position:absolute;left:1346.25px;top:338.40px;width:1.00px;height:25.00px;background:#111;z-index:3;"></div>
<div style="position:absolute;left:1412.00px;top:338.40px;width:1.00px;height:25.00px;background:#111;z-index:3;"></div>
<div style="position:absolute;left:1489.00px;top:338.40px;width:1.00px;height:25.00px;background:#111;z-index:3;"></div>
<div style="position:absolute;left:665.60px;top:346.82px;font:700 12.2px/1 'Liberation Sans',sans-serif;color:#111;white-space:pre;z-index:5;">Cash Flow / Mortgage Ratio</div>
<div style="position:absolute;left:1008.72px;top:346.77px;font:700 12.3px/1 'Liberation Sans',sans-serif;color:#111;white-space:pre;z-index:5;">110%</div>
<div style="position:absolute;left:1084.97px;top:346.77px;font:700 12.3px/1 'Liberation Sans',sans-serif;color:#111;white-space:pre;z-index:5;">113%</div>
<div style="position:absolute;left:1167.54px;top:346.77px;font:700 12.3px/1 'Liberation Sans',sans-serif;color:#111;white-space:pre;z-index:5;">123%</div>
<div style="position:absolute;left:1245.04px;top:346.77px;font:700 12.3px/1 'Liberation Sans',sans-serif;color:#111;white-space:pre;z-index:5;">142%</div>
<div style="position:absolute;left:1311.79px;top:346.77px;font:700 12.3px/1 'Liberation Sans',sans-serif;color:#111;white-space:pre;z-index:5;">164%</div>
<div style="position:absolute;left:1377.54px;top:346.77px;font:700 12.3px/1 'Liberation Sans',sans-serif;color:#111;white-space:pre;z-index:5;">187%</div>
<div style="position:absolute;left:1455.04px;top:346.77px;font:700 12.3px/1 'Liberation Sans',sans-serif;color:#111;white-space:pre;z-index:5;">243%</div>
<div style="position:absolute;left:965.50px;top:213.00px;width:1.00px;height:150.40px;background:#3333aa;z-index:4;"></div>
<div style="position:absolute;left:1042.00px;top:213.00px;width:1.00px;height:150.40px;background:#3333aa;z-index:4;"></div>
<div style="position:absolute;left:965.50px;top:362.40px;width:77.50px;height:1.00px;background:#3333aa;z-index:4;"></div>
<div style="position:absolute;left:662.50px;top:388.40px;width:827.50px;height:1.00px;background:#111;z-index:3;"></div>
<div style="position:absolute;left:662.50px;top:413.40px;width:827.50px;height:1.00px;background:#111;z-index:3;"></div>
<div style="position:absolute;left:662.50px;top:437.40px;width:827.50px;height:1.00px;background:#111;z-index:3;"></div>
<div style="position:absolute;left:662.50px;top:388.40px;width:1.00px;height:50.00px;background:#111;z-index:3;"></div>
<div style="position:absolute;left:883.60px;top:388.40px;width:1.00px;height:50.00px;background:#111;z-index:3;"></div>
<div style="position:absolute;left:965.50px;top:388.40px;width:1.00px;height:50.00px;background:#111;z-index:3;"></div>
<div style="position:absolute;left:1042.50px;top:388.40px;width:1.00px;height:50.00px;background:#111;z-index:3;"></div>
<div style="position:absolute;left:1118.75px;top:388.40px;width:1.00px;height:50.00px;background:#111;z-index:3;"></div>
<div style="position:absolute;left:1202.00px;top:388.40px;width:1.00px;height:50.00px;background:#111;z-index:3;"></div>
<div style="position:absolute;left:1279.50px;top:388.40px;width:1.00px;height:50.00px;background:#111;z-index:3;"></div>
<div style="position:absolute;left:1346.25px;top:388.40px;width:1.00px;height:50.00px;background:#111;z-index:3;"></div>
<div style="position:absolute;left:1412.00px;top:388.40px;width:1.00px;height:50.00px;background:#111;z-index:3;"></div>
<div style="position:absolute;left:1489.00px;top:388.40px;width:1.00px;height:50.00px;background:#111;z-index:3;"></div>
<div style="position:absolute;left:666.00px;top:393.06px;font:700 17.5px/1 'Liberation Sans',sans-serif;color:#111;white-space:pre;z-index:5;transform:scaleX(1.0053);transform-origin:left;">Total Equity Accrued</div>
<div style="position:absolute;left:666.00px;top:418.06px;font:700 17.5px/1 'Liberation Sans',sans-serif;color:#111;white-space:pre;z-index:5;transform:scaleX(1.0208);transform-origin:left;">Loan Payoff Amount</div>
<div style="position:absolute;left:1001.88px;top:396.07px;font:700 12.3px/1 'Liberation Sans',sans-serif;color:#111;white-space:pre;z-index:5;">31,533</div>
<div style="position:absolute;left:977.94px;top:421.07px;font:700 12.3px/1 'Liberation Sans',sans-serif;color:#111;white-space:pre;z-index:5;">$1,543,467</div>
<div style="position:absolute;left:1078.13px;top:396.07px;font:700 12.3px/1 'Liberation Sans',sans-serif;color:#111;white-space:pre;z-index:5;">64,107</div>
<div style="position:absolute;left:1054.19px;top:421.07px;font:700 12.3px/1 'Liberation Sans',sans-serif;color:#111;white-space:pre;z-index:5;">$1,510,893</div>
<div style="position:absolute;left:1154.54px;top:396.07px;font:700 12.3px/1 'Liberation Sans',sans-serif;color:#111;white-space:pre;z-index:5;">208,263</div>
<div style="position:absolute;left:1137.44px;top:421.07px;font:700 12.3px/1 'Liberation Sans',sans-serif;color:#111;white-space:pre;z-index:5;">$1,366,737</div>
<div style="position:absolute;left:1232.04px;top:396.07px;font:700 12.3px/1 'Liberation Sans',sans-serif;color:#111;white-space:pre;z-index:5;">416,027</div>
<div style="position:absolute;left:1214.94px;top:421.07px;font:700 12.3px/1 'Liberation Sans',sans-serif;color:#111;white-space:pre;z-index:5;">$1,158,973</div>
<div style="position:absolute;left:1298.79px;top:396.07px;font:700 12.3px/1 'Liberation Sans',sans-serif;color:#111;white-space:pre;z-index:5;">660,397</div>
<div style="position:absolute;left:1291.95px;top:421.07px;font:700 12.3px/1 'Liberation Sans',sans-serif;color:#111;white-space:pre;z-index:5;">$914,603</div>
<div style="position:absolute;left:1364.54px;top:396.07px;font:700 12.3px/1 'Liberation Sans',sans-serif;color:#111;white-space:pre;z-index:5;">947,822</div>
<div style="position:absolute;left:1357.70px;top:421.07px;font:700 12.3px/1 'Liberation Sans',sans-serif;color:#111;white-space:pre;z-index:5;">$627,178</div>
<div style="position:absolute;left:1431.78px;top:396.07px;font:700 12.3px/1 'Liberation Sans',sans-serif;color:#111;white-space:pre;z-index:5;">1,580,372</div>
<div style="position:absolute;left:1444.78px;top:421.07px;font:700 12.3px/1 'Liberation Sans',sans-serif;color:#111;white-space:pre;z-index:5;">-$5,372</div>
<div style="position:absolute;left:705.10px;top:467.20px;width:721.70px;height:411.80px;background:#fff;border:1px solid #bdbdbd;box-sizing:border-box;z-index:2;border-radius:12px;"></div>
<div style="position:absolute;left:999.07px;top:481.05px;font:700 13.8px/1 'Liberation Sans',sans-serif;color:#111;white-space:pre;z-index:5;">EXPENSES, YEAR 1</div>
<svg style="position:absolute;left:0;top:0;z-index:4" width="1920" height="1009"><path d="M965.6 688.2 L965.60 539.20 A149 149 0 0 1 1114.60 688.20 Z" fill="#3366cc"/><path d="M965.6 688.2 L1114.60 688.20 A149 149 0 0 1 1098.78 755.01 Z" fill="#dc3912"/><path d="M965.6 688.2 L1098.78 755.01 A149 149 0 0 1 1036.97 818.99 Z" fill="#ff9900"/><path d="M965.6 688.2 L1036.97 818.99 A149 149 0 0 1 970.28 837.13 Z" fill="#109618"/><path d="M965.6 688.2 L970.28 837.13 A149 149 0 0 1 833.48 619.31 Z" fill="#0099c6"/><path d="M965.6 688.2 L833.48 619.31 A149 149 0 0 1 895.47 556.74 Z" fill="#dd4477"/><path d="M965.6 688.2 L895.47 556.74 A149 149 0 0 1 965.60 539.20 Z" fill="#66aa00"/></svg>
<div style="position:absolute;left:955.05px;top:520.73px;font:400 12.8px/1 'Liberation Sans',sans-serif;color:#222;white-space:pre;z-index:6;">0%</div>
<div style="position:absolute;left:925.15px;top:554.83px;font:400 12.8px/1 'Liberation Sans',sans-serif;color:#222;white-space:pre;z-index:6;">8%</div>
<div style="position:absolute;left:863.35px;top:591.13px;font:400 12.8px/1 'Liberation Sans',sans-serif;color:#222;white-space:pre;z-index:6;">9%</div>
<div style="position:absolute;left:1044.39px;top:595.83px;font:400 12.8px/1 'Liberation Sans',sans-serif;color:#222;white-space:pre;z-index:6;">25%</div>
<div style="position:absolute;left:1084.15px;top:714.73px;font:400 12.8px/1 'Liberation Sans',sans-serif;color:#222;white-space:pre;z-index:6;">7%</div>
<div style="position:absolute;left:1043.99px;top:771.43px;font:400 12.8px/1 'Liberation Sans',sans-serif;color:#222;white-space:pre;z-index:6;">10%</div>
<div style="position:absolute;left:989.95px;top:811.03px;font:400 12.8px/1 'Liberation Sans',sans-serif;color:#222;white-space:pre;z-index:6;">8%</div>
<div style="position:absolute;left:844.89px;top:751.33px;font:400 12.8px/1 'Liberation Sans',sans-serif;color:#222;white-space:pre;z-index:6;">33%</div>
<div style="position:absolute;left:960.55px;top:846.03px;font:400 12.8px/1 'Liberation Sans',sans-serif;color:#222;white-space:pre;z-index:6;">0%</div>
<div style="position:absolute;left:1235.00px;top:574.50px;width:8.00px;height:8.00px;background:#3366cc;z-index:5;"></div>
<div style="position:absolute;left:1246.90px;top:571.03px;font:400 15.5px/1 'Liberation Sans',sans-serif;color:#222;white-space:pre;z-index:6;">Property Taxes</div>
<div style="position:absolute;left:1235.00px;top:602.50px;width:8.00px;height:8.00px;background:#dc3912;z-index:5;"></div>
<div style="position:absolute;left:1246.90px;top:599.03px;font:400 15.5px/1 'Liberation Sans',sans-serif;color:#222;white-space:pre;z-index:6;">Insurance</div>
<div style="position:absolute;left:1235.00px;top:629.50px;width:8.00px;height:8.00px;background:#ff9900;z-index:5;"></div>
<div style="position:absolute;left:1246.90px;top:626.03px;font:400 15.5px/1 'Liberation Sans',sans-serif;color:#222;white-space:pre;z-index:6;">Maintenance Allowance</div>
<div style="position:absolute;left:1235.00px;top:656.50px;width:8.00px;height:8.00px;background:#109618;z-index:5;"></div>
<div style="position:absolute;left:1246.90px;top:653.03px;font:400 15.5px/1 'Liberation Sans',sans-serif;color:#222;white-space:pre;z-index:6;">Property Management</div>
<div style="position:absolute;left:1235.00px;top:684.50px;width:8.00px;height:8.00px;background:#990099;z-index:5;"></div>
<div style="position:absolute;left:1235.00px;top:711.50px;width:8.00px;height:8.00px;background:#0099c6;z-index:5;"></div>
<div style="position:absolute;left:1246.90px;top:708.03px;font:400 15.5px/1 'Liberation Sans',sans-serif;color:#222;white-space:pre;z-index:6;">Total Utilities</div>
<div style="position:absolute;left:1235.00px;top:739.50px;width:8.00px;height:8.00px;background:#dd4477;z-index:5;"></div>
<div style="position:absolute;left:1246.90px;top:736.03px;font:400 15.5px/1 'Liberation Sans',sans-serif;color:#222;white-space:pre;z-index:6;">Resident Manager</div>
<div style="position:absolute;left:1235.00px;top:766.50px;width:8.00px;height:8.00px;background:#66aa00;z-index:5;"></div>
<div style="position:absolute;left:1246.90px;top:763.03px;font:400 15.5px/1 'Liberation Sans',sans-serif;color:#222;white-space:pre;z-index:6;">Other</div>
<div style="position:absolute;left:1235.00px;top:794.50px;width:8.00px;height:8.00px;background:#b82e2e;z-index:5;"></div>
<div style="position:absolute;left:1246.90px;top:791.03px;font:400 15.5px/1 'Liberation Sans',sans-serif;color:#222;white-space:pre;z-index:6;">Other</div>
<div style="position:absolute;left:0.00px;top:0.00px;width:1920.00px;height:2.00px;background:#217346;z-index:3;"></div>
<div style="position:absolute;left:0.00px;top:2.00px;width:1920.00px;height:2.50px;background:#fcfcfc;z-index:1;"></div>
<div style="position:absolute;left:17.50px;top:11.23px;font:400 13px/1 'Liberation Sans',sans-serif;color:#333;white-space:pre;z-index:5;transform:scaleX(0.8831);transform-origin:left;">File</div>
<div style="position:absolute;left:68.00px;top:11.23px;font:400 13px/1 'Liberation Sans',sans-serif;color:#1a1a1a;white-space:pre;z-index:5;transform:scaleX(1.0526);transform-origin:left;">Home</div>
<div style="position:absolute;left:133.00px;top:11.23px;font:400 13px/1 'Liberation Sans',sans-serif;color:#333;white-space:pre;z-index:5;transform:scaleX(0.9688);transform-origin:left;">Insert</div>
<div style="position:absolute;left:196.00px;top:11.23px;font:400 13px/1 'Liberation Sans',sans-serif;color:#333;white-space:pre;z-index:5;transform:scaleX(0.9725);transform-origin:left;">Page Layout</div>
<div style="position:absolute;left:297.00px;top:11.23px;font:400 13px/1 'Liberation Sans',sans-serif;color:#333;white-space:pre;z-index:5;transform:scaleX(0.9690);transform-origin:left;">Formulas</div>
<div style="position:absolute;left:379.00px;top:11.23px;font:400 13px/1 'Liberation Sans',sans-serif;color:#333;white-space:pre;z-index:5;transform:scaleX(0.9650);transform-origin:left;">Data</div>
<div style="position:absolute;left:435.00px;top:11.23px;font:400 13px/1 'Liberation Sans',sans-serif;color:#333;white-space:pre;z-index:5;transform:scaleX(0.9267);transform-origin:left;">Review</div>
<div style="position:absolute;left:503.00px;top:11.23px;font:400 13px/1 'Liberation Sans',sans-serif;color:#333;white-space:pre;z-index:5;transform:scaleX(0.9483);transform-origin:left;">View</div>
<div style="position:absolute;left:558.00px;top:11.23px;font:400 13px/1 'Liberation Sans',sans-serif;color:#333;white-space:pre;z-index:5;transform:scaleX(0.9911);transform-origin:left;">Help</div>
<div style="position:absolute;left:614.50px;top:11.23px;font:400 13px/1 'Liberation Sans',sans-serif;color:#333;white-space:pre;z-index:5;">Acrobat</div>
<div style="position:absolute;left:68.00px;top:27.50px;width:38.00px;height:2.50px;background:#217346;z-index:3;"></div>
<div style="position:absolute;left:1733.00px;top:7.00px;width:67.00px;height:21.00px;background:#fbfbfb;z-index:2;border-radius:3px;box-shadow:0 0 1px #ddd;"></div>
<svg style="position:absolute;left:1740px;top:12px;z-index:6;overflow:visible" width="12" height="11" viewBox="0 0 12 11"><path d="M1 4 L1 10 L11 10 L11 7" stroke="#217346" stroke-width="1.2" fill="none"/><path d="M4 7 C5 3 7 3 10 3 M8 1 L10.5 3 L8 5" stroke="#217346" stroke-width="1.2" fill="none"/></svg>
<div style="position:absolute;left:1755.50px;top:11.23px;font:400 13px/1 'Liberation Sans',sans-serif;color:#217346;white-space:pre;z-index:5;transform:scaleX(1.0089);transform-origin:left;">Share</div>
<div style="position:absolute;left:1809.00px;top:7.00px;width:97.00px;height:21.00px;background:#fbfbfb;z-index:2;border-radius:3px;box-shadow:0 0 1px #ddd;"></div>
<svg style="position:absolute;left:1816px;top:12px;z-index:6;overflow:visible" width="12" height="11" viewBox="0 0 12 11"><path d="M1 1 L11 1 L11 7 L5 7 L2 10 L2 7 L1 7 Z" stroke="#217346" stroke-width="1.2" fill="none"/></svg>
<div style="position:absolute;left:1832.00px;top:11.23px;font:400 13px/1 'Liberation Sans',sans-serif;color:#217346;white-space:pre;z-index:5;transform:scaleX(1.0422);transform-origin:left;">Comments</div>
<div style="position:absolute;left:0.00px;top:127.50px;width:1920.00px;height:1.00px;background:#d6d6d6;z-index:3;"></div>
<div style="position:absolute;left:165.00px;top:36.00px;width:1.00px;height:88.00px;background:#d4d4d4;z-index:3;"></div>
<div style="position:absolute;left:390.00px;top:36.00px;width:1.00px;height:88.00px;background:#d4d4d4;z-index:3;"></div>
<div style="position:absolute;left:664.00px;top:36.00px;width:1.00px;height:88.00px;background:#d4d4d4;z-index:3;"></div>
<div style="position:absolute;left:814.00px;top:36.00px;width:1.00px;height:88.00px;background:#d4d4d4;z-index:3;"></div>
<div style="position:absolute;left:1407.00px;top:36.00px;width:1.00px;height:88.00px;background:#d4d4d4;z-index:3;"></div>
<div style="position:absolute;left:1550.00px;top:36.00px;width:1.00px;height:88.00px;background:#d4d4d4;z-index:3;"></div>
<div style="position:absolute;left:1751.00px;top:36.00px;width:1.00px;height:88.00px;background:#d4d4d4;z-index:3;"></div>
<div style="position:absolute;left:1808.00px;top:36.00px;width:1.00px;height:88.00px;background:#d4d4d4;z-index:3;"></div>
<div style="position:absolute;left:1882.00px;top:36.00px;width:1.00px;height:88.00px;background:#d4d4d4;z-index:3;"></div>
<div style="position:absolute;left:48.00px;top:114.52px;font:400 12px/1 'Liberation Sans',sans-serif;color:#444;white-space:pre;z-index:5;transform:scaleX(0.9929);transform-origin:left;">Clipboard</div>
<div style="position:absolute;left:257.00px;top:114.52px;font:400 12px/1 'Liberation Sans',sans-serif;color:#444;white-space:pre;z-index:5;transform:scaleX(0.9578);transform-origin:left;">Font</div>
<div style="position:absolute;left:493.00px;top:114.52px;font:400 12px/1 'Liberation Sans',sans-serif;color:#444;white-space:pre;z-index:5;transform:scaleX(0.9745);transform-origin:left;">Alignment</div>
<div style="position:absolute;left:711.00px;top:114.52px;font:400 12px/1 'Liberation Sans',sans-serif;color:#444;white-space:pre;z-index:5;transform:scaleX(0.9606);transform-origin:left;">Number</div>
<div style="position:absolute;left:1096.00px;top:114.52px;font:400 12px/1 'Liberation Sans',sans-serif;color:#444;white-space:pre;z-index:5;transform:scaleX(0.8874);transform-origin:left;">Styles</div>
<div style="position:absolute;left:1467.00px;top:114.52px;font:400 12px/1 'Liberation Sans',sans-serif;color:#444;white-space:pre;z-index:5;transform:scaleX(0.8998);transform-origin:left;">Cells</div>
<div style="position:absolute;left:1632.00px;top:114.52px;font:400 12px/1 'Liberation Sans',sans-serif;color:#444;white-space:pre;z-index:5;transform:scaleX(1.0084);transform-origin:left;">Editing</div>
<div style="position:absolute;left:1766.00px;top:114.52px;font:400 12px/1 'Liberation Sans',sans-serif;color:#444;white-space:pre;z-index:5;transform:scaleX(0.9197);transform-origin:left;">Ideas</div>
<div style="position:absolute;left:1820.00px;top:114.52px;font:400 12px/1 'Liberation Sans',sans-serif;color:#444;white-space:pre;z-index:5;transform:scaleX(0.9441);transform-origin:left;">Sensitivity</div>
<svg style="position:absolute;left:153px;top:116px;z-index:6;overflow:visible" width="9" height="9" viewBox="0 0 9 9"><path d="M0.5 0.5 L0.5 8.5 L8.5 8.5 L8.5 0.5 Z M3 3 L7 7 M7 4 L7 7 L4 7" stroke="#8a8a8a" stroke-width="0.9" fill="none"/></svg>
<svg style="position:absolute;left:379px;top:116px;z-index:6;overflow:visible" width="9" height="9" viewBox="0 0 9 9"><path d="M0.5 0.5 L0.5 8.5 L8.5 8.5 L8.5 0.5 Z M3 3 L7 7 M7 4 L7 7 L4 7" stroke="#8a8a8a" stroke-width="0.9" fill="none"/></svg>
<svg style="position:absolute;left:653px;top:116px;z-index:6;overflow:visible" width="9" height="9" viewBox="0 0 9 9"><path d="M0.5 0.5 L0.5 8.5 L8.5 8.5 L8.5 0.5 Z M3 3 L7 7 M7 4 L7 7 L4 7" stroke="#8a8a8a" stroke-width="0.9" fill="none"/></svg>
<svg style="position:absolute;left:802px;top:116px;z-index:6;overflow:visible" width="9" height="9" viewBox="0 0 9 9"><path d="M0.5 0.5 L0.5 8.5 L8.5 8.5 L8.5 0.5 Z M3 3 L7 7 M7 4 L7 7 L4 7" stroke="#8a8a8a" stroke-width="0.9" fill="none"/></svg>
<svg style="position:absolute;left:17px;top:40px;z-index:6;overflow:visible" width="30" height="30" viewBox="0 0 30 30"><rect x="1.5" y="3.5" width="17" height="22" fill="#fff" stroke="#e8a030" stroke-width="2"/><path d="M5 3.5 C5 0.5 15 0.5 15 3.5 L15 6 L5 6 Z" fill="#f4f4f4" stroke="#666" stroke-width="1"/><rect x="12.5" y="13" width="13" height="15" fill="#fff" stroke="#333" stroke-width="1.2"/></svg>
<div style="position:absolute;left:15.00px;top:75.47px;font:400 12.5px/1 'Liberation Sans',sans-serif;color:#262626;white-space:pre;z-index:5;transform:scaleX(0.8760);transform-origin:left;">Paste</div>
<svg style="position:absolute;left:24px;top:94px;z-index:6;overflow:visible" width="9" height="5" viewBox="0 0 9 5"><path d="M1 1 L4.5 4 L8 1" stroke="#444" stroke-width="1.1" fill="none"/></svg>
<svg style="position:absolute;left:55px;top:40px;z-index:6;overflow:visible" width="12" height="16" viewBox="0 0 12 16"><path d="M2 1 L9 11 M10 1 L3 11" stroke="#444" stroke-width="1.2"/><circle cx="3" cy="13" r="2.3" fill="#4a90d9"/><circle cx="9" cy="13" r="2.3" fill="#4a90d9"/></svg>
<div style="position:absolute;left:72.00px;top:41.48px;font:400 12.5px/1 'Liberation Sans',sans-serif;color:#262626;white-space:pre;z-index:5;transform:scaleX(0.9253);transform-origin:left;">Cut</div>
<svg style="position:absolute;left:53px;top:63px;z-index:6;overflow:visible" width="16" height="17" viewBox="0 0 16 17"><rect x="0.5" y="0.5" width="8" height="12" fill="#fff" stroke="#333"/><path d="M6.5 3.5 L12 3.5 L15 6.5 L15 15.5 L6.5 15.5 Z" fill="#fff" stroke="#333"/><path d="M8.5 9 H13 M8.5 11 H13 M8.5 13 H13" stroke="#555" stroke-width="0.7"/></svg>
<div style="position:absolute;left:72.00px;top:65.97px;font:400 12.5px/1 'Liberation Sans',sans-serif;color:#262626;white-space:pre;z-index:5;transform:scaleX(0.9595);transform-origin:left;">Copy</div>
<svg style="position:absolute;left:110px;top:70px;z-index:6;overflow:visible" width="9" height="5" viewBox="0 0 9 5"><path d="M1 1 L4.5 4 L8 1" stroke="#444" stroke-width="1.1" fill="none"/></svg>
<svg style="position:absolute;left:53px;top:86px;z-index:6;overflow:visible" width="16" height="17" viewBox="0 0 16 17"><path d="M2 10 L8 5 L12 9 L6 15 Z" fill="#f0a030"/><path d="M9 6 L14 1 M11 8 L15 4" stroke="#333" stroke-width="1.5"/></svg>
<div style="position:absolute;left:72.00px;top:89.47px;font:400 12.5px/1 'Liberation Sans',sans-serif;color:#262626;white-space:pre;z-index:5;transform:scaleX(0.9436);transform-origin:left;">Format Painter</div>
<div style="position:absolute;left:173.00px;top:44.50px;width:122.50px;height:21.50px;background:#fff;border:1px solid #c8c8c8;box-sizing:border-box;z-index:3;"></div>
<div style="position:absolute;left:176.00px;top:49.48px;font:400 12.5px/1 'Liberation Sans',sans-serif;color:#262626;white-space:pre;z-index:5;transform:scaleX(0.9597);transform-origin:left;">Arial</div>
<svg style="position:absolute;left:285px;top:53px;z-index:6;overflow:visible" width="8" height="5" viewBox="0 0 8 5"><path d="M1 1 L4 4 L7 1" stroke="#444" stroke-width="1.1" fill="none"/></svg>
<div style="position:absolute;left:295.50px;top:44.50px;width:43.00px;height:21.50px;background:#fff;border:1px solid #c8c8c8;box-sizing:border-box;z-index:3;"></div>
<div style="position:absolute;left:300.00px;top:49.48px;font:400 12.5px/1 'Liberation Sans',sans-serif;color:#262626;white-space:pre;z-index:5;transform:scaleX(0.8630);transform-origin:left;">10</div>
<svg style="position:absolute;left:328px;top:53px;z-index:6;overflow:visible" width="8" height="5" viewBox="0 0 8 5"><path d="M1 1 L4 4 L7 1" stroke="#444" stroke-width="1.1" fill="none"/></svg>
<div style="position:absolute;left:343.00px;top:47.27px;font:400 15px/1 'Liberation Sans',sans-serif;color:#262626;white-space:pre;z-index:5;">A</div>
<svg style="position:absolute;left:352px;top:47px;z-index:6;overflow:visible" width="5" height="4" viewBox="0 0 5 4"><path d="M0.5 3 L2.5 1 L4.5 3" stroke="#444" stroke-width="0.9" fill="none"/></svg>
<div style="position:absolute;left:366.00px;top:49.23px;font:400 13px/1 'Liberation Sans',sans-serif;color:#262626;white-space:pre;z-index:5;transform:scaleX(1.0379);transform-origin:left;">A</div>
<svg style="position:absolute;left:374px;top:48px;z-index:6;overflow:visible" width="5" height="4" viewBox="0 0 5 4"><path d="M0.5 1 L2.5 3 L4.5 1" stroke="#444" stroke-width="0.9" fill="none"/></svg>
<div style="position:absolute;left:180.00px;top:80.23px;font:700 13px/1 'Liberation Sans',sans-serif;color:#262626;white-space:pre;z-index:5;">B</div>
<div style="position:absolute;left:202.00px;top:80.23px;font:400 13px/1 'Liberation Serif',serif;color:#262626;white-space:pre;z-index:5;font-style:italic;">I</div>
<div style="position:absolute;left:222.00px;top:79.73px;font:400 13px/1 'Liberation Sans',sans-serif;color:#262626;white-space:pre;z-index:5;text-decoration:underline;">U</div>
<svg style="position:absolute;left:241px;top:85px;z-index:6;overflow:visible" width="8" height="5" viewBox="0 0 8 5"><path d="M1 1 L4 4 L7 1" stroke="#555" stroke-width="1.1" fill="none"/></svg>
<div style="position:absolute;left:254.00px;top:78.00px;width:1.00px;height:18.00px;background:#d4d4d4;z-index:3;"></div>
<svg style="position:absolute;left:265px;top:79px;z-index:6;overflow:visible" width="17" height="16" viewBox="0 0 17 16"><path d="M0.5 0.5 H16.5 V15.5 H0.5 Z M8.5 0.5 V15.5 M0.5 8 H16.5 M4.5 0.5 V14 M12.5 0.5 V14 M0.5 4 H16.5 M0.5 11.5 H16.5" stroke="#666" stroke-width="0.6" fill="none"/><path d="M0.5 0.5 V15 M16.5 0.5 V15 M8.5 4 V12 M4 8 H13" stroke="#333" stroke-width="1"/><path d="M0 15.5 H17" stroke="#222" stroke-width="1.6"/></svg>
<svg style="position:absolute;left:287px;top:85px;z-index:6;overflow:visible" width="8" height="5" viewBox="0 0 8 5"><path d="M1 1 L4 4 L7 1" stroke="#555" stroke-width="1.1" fill="none"/></svg>
<div style="position:absolute;left:304.00px;top:78.00px;width:1.00px;height:18.00px;background:#d4d4d4;z-index:3;"></div>
<svg style="position:absolute;left:312px;top:78px;z-index:6;overflow:visible" width="18" height="18" viewBox="0 0 18 18"><path d="M3 8 L8 3 L13 8 L8 13 Z" fill="#fff" stroke="#444" stroke-width="1.2"/><path d="M13 9 C14 11 15 12 14 13" stroke="#444" fill="none"/><rect x="0" y="14" width="17" height="3.5" fill="#f0e000"/></svg>
<svg style="position:absolute;left:334px;top:85px;z-index:6;overflow:visible" width="8" height="5" viewBox="0 0 8 5"><path d="M1 1 L4 4 L7 1" stroke="#555" stroke-width="1.1" fill="none"/></svg>
<div style="position:absolute;left:350.00px;top:77.25px;font:400 14px/1 'Liberation Sans',sans-serif;color:#262626;white-space:pre;z-index:5;transform:scaleX(1.2850);transform-origin:left;">A</div>
<div style="position:absolute;left:349.00px;top:92.00px;width:16.00px;height:3.50px;background:#e00000;z-index:4;"></div>
<svg style="position:absolute;left:371px;top:85px;z-index:6;overflow:visible" width="8" height="5" viewBox="0 0 8 5"><path d="M1 1 L4 4 L7 1" stroke="#555" stroke-width="1.1" fill="none"/></svg>
<div style="position:absolute;left:443.40px;top:44.10px;width:21.30px;height:21.90px;background:#c6c6c6;z-index:2;"></div>
<div style="position:absolute;left:402.00px;top:47.00px;width:14.00px;height:1.30px;background:#333;z-index:5;"></div>
<div style="position:absolute;left:404.00px;top:51.00px;width:10.00px;height:1.30px;background:#333;z-index:5;"></div>
<div style="position:absolute;left:402.00px;top:55.00px;width:14.00px;height:1.30px;background:#333;z-index:5;"></div>
<div style="position:absolute;left:424.00px;top:50.00px;width:14.00px;height:1.30px;background:#333;z-index:5;"></div>
<div style="position:absolute;left:426.00px;top:54.00px;width:10.00px;height:1.30px;background:#333;z-index:5;"></div>
<div style="position:absolute;left:424.00px;top:58.00px;width:14.00px;height:1.30px;background:#333;z-index:5;"></div>
<div style="position:absolute;left:447.00px;top:54.00px;width:14.00px;height:1.30px;background:#333;z-index:5;"></div>
<div style="position:absolute;left:449.00px;top:58.00px;width:10.00px;height:1.30px;background:#333;z-index:5;"></div>
<div style="position:absolute;left:447.00px;top:62.00px;width:14.00px;height:1.30px;background:#333;z-index:5;"></div>
<svg style="position:absolute;left:477px;top:46px;z-index:6;overflow:visible" width="18" height="16" viewBox="0 0 18 16"><text x="0" y="10" font-size="9" font-family="Liberation Sans" fill="#444" transform="rotate(-40 6 8)">ab</text><path d="M6 13 L15 5 M12 5 L15 5 L15 8" stroke="#4a90d9" stroke-width="1.3" fill="none"/></svg>
<svg style="position:absolute;left:497px;top:53px;z-index:6;overflow:visible" width="8" height="5" viewBox="0 0 8 5"><path d="M1 1 L4 4 L7 1" stroke="#555" stroke-width="1.1" fill="none"/></svg>
<div style="position:absolute;left:402.00px;top:80.00px;width:14.00px;height:1.30px;background:#333;z-index:5;"></div>
<div style="position:absolute;left:402.00px;top:84.00px;width:10.00px;height:1.30px;background:#333;z-index:5;"></div>
<div style="position:absolute;left:402.00px;top:88.00px;width:14.00px;height:1.30px;background:#333;z-index:5;"></div>
<div style="position:absolute;left:402.00px;top:92.00px;width:10.00px;height:1.30px;background:#333;z-index:5;"></div>
<div style="position:absolute;left:424.00px;top:80.00px;width:14.00px;height:1.30px;background:#333;z-index:5;"></div>
<div style="position:absolute;left:426.00px;top:84.00px;width:10.00px;height:1.30px;background:#333;z-index:5;"></div>
<div style="position:absolute;left:424.00px;top:88.00px;width:14.00px;height:1.30px;background:#333;z-index:5;"></div>
<div style="position:absolute;left:426.00px;top:92.00px;width:10.00px;height:1.30px;background:#333;z-index:5;"></div>
<div style="position:absolute;left:446.50px;top:80.00px;width:14.00px;height:1.30px;background:#333;z-index:5;"></div>
<div style="position:absolute;left:450.50px;top:84.00px;width:10.00px;height:1.30px;background:#333;z-index:5;"></div>
<div style="position:absolute;left:446.50px;top:88.00px;width:14.00px;height:1.30px;background:#333;z-index:5;"></div>
<div style="position:absolute;left:450.50px;top:92.00px;width:10.00px;height:1.30px;background:#333;z-index:5;"></div>
<div style="position:absolute;left:469.00px;top:44.00px;width:1.00px;height:53.00px;background:#d8d8d8;z-index:3;"></div>
<div style="position:absolute;left:477.50px;top:80.00px;width:15.00px;height:1.30px;background:#333;z-index:5;"></div>
<div style="position:absolute;left:477.50px;top:92.00px;width:15.00px;height:1.30px;background:#333;z-index:5;"></div>
<div style="position:absolute;left:484.00px;top:84.00px;width:8.00px;height:1.30px;background:#333;z-index:5;"></div>
<div style="position:absolute;left:484.00px;top:88.00px;width:8.00px;height:1.30px;background:#333;z-index:5;"></div>
<svg style="position:absolute;left:477px;top:82px;z-index:6;overflow:visible" width="7" height="8" viewBox="0 0 7 8"><path d="M6 4 H1 M3.5 1.5 L1 4 L3.5 6.5" stroke="#3a8fd0" stroke-width="1.3" fill="none"/></svg>
<div style="position:absolute;left:499.50px;top:80.00px;width:15.00px;height:1.30px;background:#333;z-index:5;"></div>
<div style="position:absolute;left:499.50px;top:92.00px;width:15.00px;height:1.30px;background:#333;z-index:5;"></div>
<div style="position:absolute;left:506.00px;top:84.00px;width:8.00px;height:1.30px;background:#333;z-index:5;"></div>
<div style="position:absolute;left:506.00px;top:88.00px;width:8.00px;height:1.30px;background:#333;z-index:5;"></div>
<svg style="position:absolute;left:499px;top:82px;z-index:6;overflow:visible" width="7" height="8" viewBox="0 0 7 8"><path d="M0 4 H5.5 M3 1.5 L5.5 4 L3 6.5" stroke="#3a8fd0" stroke-width="1.3" fill="none"/></svg>
<div style="position:absolute;left:522.00px;top:40.00px;width:1.00px;height:60.00px;background:#d8d8d8;z-index:3;"></div>
<svg style="position:absolute;left:531px;top:46px;z-index:6;overflow:visible" width="16" height="17" viewBox="0 0 16 17"><text x="0" y="8" font-size="9" font-family="Liberation Sans" fill="#444">ab</text><text x="0" y="16" font-size="8" font-family="Liberation Sans" fill="#4a90d9">c</text><path d="M12 8 C15 9 15 13 11 13 L8 13 M9.5 11.5 L8 13 L9.5 14.5" stroke="#4a90d9" stroke-width="1" fill="none"/></svg>
<div style="position:absolute;left:549.00px;top:49.48px;font:400 12.5px/1 'Liberation Sans',sans-serif;color:#262626;white-space:pre;z-index:5;transform:scaleX(0.9138);transform-origin:left;">Wrap Text</div>
<svg style="position:absolute;left:530px;top:79px;z-index:6;overflow:visible" width="16" height="15" viewBox="0 0 16 15"><rect x="0.5" y="0.5" width="15" height="14" fill="#fff" stroke="#3a7bd5"/><path d="M0.5 4 H15.5 M0.5 11 H15.5" stroke="#3a7bd5"/><path d="M3 7.5 H13 M5 5.5 L3 7.5 L5 9.5 M11 5.5 L13 7.5 L11 9.5" stroke="#3a7bd5" fill="none"/></svg>
<div style="position:absolute;left:549.00px;top:81.47px;font:400 12.5px/1 'Liberation Sans',sans-serif;color:#262626;white-space:pre;z-index:5;transform:scaleX(0.9634);transform-origin:left;">Merge &amp; Center</div>
<svg style="position:absolute;left:643px;top:85px;z-index:6;overflow:visible" width="8" height="5" viewBox="0 0 8 5"><path d="M1 1 L4 4 L7 1" stroke="#555" stroke-width="1.1" fill="none"/></svg>
<div style="position:absolute;left:673.00px;top:44.50px;width:133.00px;height:21.50px;background:#fff;border:1px solid #c8c8c8;box-sizing:border-box;z-index:3;"></div>
<div style="position:absolute;left:676.00px;top:49.48px;font:400 12.5px/1 'Liberation Sans',sans-serif;color:#262626;white-space:pre;z-index:5;transform:scaleX(0.8995);transform-origin:left;">General</div>
<svg style="position:absolute;left:796px;top:53px;z-index:6;overflow:visible" width="8" height="5" viewBox="0 0 8 5"><path d="M1 1 L4 4 L7 1" stroke="#444" stroke-width="1.1" fill="none"/></svg>
<div style="position:absolute;left:679.00px;top:79.79px;font:400 16px/1 'Liberation Sans',sans-serif;color:#262626;white-space:pre;z-index:5;transform:scaleX(1.0112);transform-origin:left;">$</div>
<svg style="position:absolute;left:696px;top:85px;z-index:6;overflow:visible" width="8" height="5" viewBox="0 0 8 5"><path d="M1 1 L4 4 L7 1" stroke="#555" stroke-width="1.1" fill="none"/></svg>
<div style="position:absolute;left:712.00px;top:79.79px;font:400 16px/1 'Liberation Sans',sans-serif;color:#262626;white-space:pre;z-index:5;transform:scaleX(1.1246);transform-origin:left;">%</div>
<svg style="position:absolute;left:740px;top:80px;z-index:6;overflow:visible" width="9" height="14" viewBox="0 0 9 14"><circle cx="4.3" cy="4.3" r="3.3" fill="#333"/><path d="M7.2 4.5 C7.5 8.5 5 11.5 2 12.5" stroke="#333" stroke-width="2" fill="none"/></svg>
<div style="position:absolute;left:758.00px;top:80.00px;width:1.00px;height:15.00px;background:#d4d4d4;z-index:3;"></div>
<svg style="position:absolute;left:765px;top:78px;z-index:6;overflow:visible" width="18" height="18" viewBox="0 0 18 18"><text x="6" y="8" font-size="8" font-family="Liberation Sans" fill="#444">0</text><text x="4" y="16" font-size="8" font-family="Liberation Sans" fill="#444">.00</text><path d="M0 4 H6 M2 2 L0 4 L2 6" stroke="#4a90d9" stroke-width="1" fill="none"/></svg>
<svg style="position:absolute;left:786px;top:78px;z-index:6;overflow:visible" width="18" height="18" viewBox="0 0 18 18"><text x="5" y="8" font-size="8" font-family="Liberation Sans" fill="#444">.00</text><text x="10" y="16" font-size="8" font-family="Liberation Sans" fill="#444">.0</text><path d="M0 12 H8 M6 10 L8 12 L6 14" stroke="#4a90d9" stroke-width="1" fill="none"/></svg>
<svg style="position:absolute;left:846px;top:42px;z-index:6;overflow:visible" width="29" height="24" viewBox="0 0 29 24"><rect x="0.5" y="0.5" width="27" height="22" fill="#fff" stroke="#555"/><rect x="1" y="1" width="14" height="7" fill="#f0787a"/><rect x="1" y="15" width="14" height="7" fill="#f0787a"/><rect x="1" y="8" width="8" height="7" fill="#4a90d9"/><path d="M0.5 8 H28 M0.5 15 H28 M15 0.5 V23 M21.5 0.5 V23" stroke="#555" stroke-width="0.8"/></svg>
<div style="position:absolute;left:829.00px;top:75.47px;font:400 12.5px/1 'Liberation Sans',sans-serif;color:#262626;white-space:pre;z-index:5;transform:scaleX(0.9913);transform-origin:left;">Conditional</div>
<div style="position:absolute;left:825.00px;top:90.47px;font:400 12.5px/1 'Liberation Sans',sans-serif;color:#262626;white-space:pre;z-index:5;transform:scaleX(0.9876);transform-origin:left;">Formatting</div>
<svg style="position:absolute;left:886px;top:94px;z-index:6;overflow:visible" width="7" height="4" viewBox="0 0 7 4"><path d="M0.5 0.5 L3.5 3.5 L6.5 0.5" stroke="#555" stroke-width="1" fill="none"/></svg>
<svg style="position:absolute;left:912px;top:42px;z-index:6;overflow:visible" width="30" height="26" viewBox="0 0 30 26"><rect x="0.5" y="0.5" width="27" height="22" fill="#fff" stroke="#555"/><rect x="14" y="8" width="13" height="14" fill="#4a90d9"/><path d="M0.5 8 H28 M0.5 15 H28 M7 0.5 V23 M14 0.5 V23 M21 0.5 V23" stroke="#555" stroke-width="0.8"/><path d="M12 24 L26 8" stroke="#4a90d9" stroke-width="3"/></svg>
<div style="position:absolute;left:900.00px;top:75.47px;font:400 12.5px/1 'Liberation Sans',sans-serif;color:#262626;white-space:pre;z-index:5;transform:scaleX(0.9242);transform-origin:left;">Format as</div>
<div style="position:absolute;left:907.00px;top:90.47px;font:400 12.5px/1 'Liberation Sans',sans-serif;color:#262626;white-space:pre;z-index:5;transform:scaleX(0.9370);transform-origin:left;">Table</div>
<svg style="position:absolute;left:936px;top:94px;z-index:6;overflow:visible" width="7" height="4" viewBox="0 0 7 4"><path d="M0.5 0.5 L3.5 3.5 L6.5 0.5" stroke="#555" stroke-width="1" fill="none"/></svg>
<div style="position:absolute;left:955.00px;top:38.50px;width:443.00px;height:61.00px;background:#fff;border:1px solid #dadada;box-sizing:border-box;z-index:2;"></div>
<div style="position:absolute;left:964.00px;top:48.23px;font:400 13px/1 'Liberation Sans',sans-serif;color:#262626;white-space:pre;z-index:5;transform:scaleX(0.9938);transform-origin:left;">Comma 2</div>
<div style="position:absolute;left:1070.00px;top:48.23px;font:400 13px/1 'Liberation Sans',sans-serif;color:#262626;white-space:pre;z-index:5;transform:scaleX(0.9909);transform-origin:left;">Currency 2</div>
<div style="position:absolute;left:1176.00px;top:48.23px;font:400 13px/1 'Liberation Sans',sans-serif;color:#262626;white-space:pre;z-index:5;transform:scaleX(0.9860);transform-origin:left;">Normal 2</div>
<div style="position:absolute;left:1282.00px;top:48.23px;font:400 13px/1 'Liberation Sans',sans-serif;color:#262626;white-space:pre;z-index:5;transform:scaleX(1.0064);transform-origin:left;">Percent 2</div>
<div style="position:absolute;left:958.00px;top:70.00px;width:104.00px;height:27.00px;background:#fff;border:2px solid #c6c6c6;box-sizing:border-box;z-index:3;"></div>
<div style="position:absolute;left:964.00px;top:76.23px;font:400 13px/1 'Liberation Sans',sans-serif;color:#262626;white-space:pre;z-index:5;transform:scaleX(0.9786);transform-origin:left;">Normal</div>
<div style="position:absolute;left:1066.00px;top:72.00px;width:100.00px;height:22.00px;background:#ffc7ce;z-index:3;"></div>
<div style="position:absolute;left:1070.00px;top:76.23px;font:400 13px/1 'Liberation Sans',sans-serif;color:#9c0006;white-space:pre;z-index:5;transform:scaleX(0.9511);transform-origin:left;">Bad</div>
<div style="position:absolute;left:1172.00px;top:72.00px;width:100.00px;height:22.00px;background:#c6efce;z-index:3;"></div>
<div style="position:absolute;left:1176.00px;top:76.23px;font:400 13px/1 'Liberation Sans',sans-serif;color:#006100;white-space:pre;z-index:5;transform:scaleX(1.1320);transform-origin:left;">Good</div>
<div style="position:absolute;left:1278.00px;top:72.00px;width:100.00px;height:22.00px;background:#ffeb9c;z-index:3;"></div>
<div style="position:absolute;left:1282.00px;top:76.23px;font:400 13px/1 'Liberation Sans',sans-serif;color:#9c5700;white-space:pre;z-index:5;transform:scaleX(1.0976);transform-origin:left;">Neutral</div>
<div style="position:absolute;left:1382.00px;top:39.00px;width:15.00px;height:59.00px;background:#fff;z-index:3;"></div>
<div style="position:absolute;left:1382.00px;top:58.50px;width:15.00px;height:19.00px;background:#fff;border:1px solid #d4d4d4;box-sizing:border-box;z-index:4;"></div>
<div style="position:absolute;left:1382.00px;top:78.50px;width:15.00px;height:19.50px;background:#fff;border:1px solid #d4d4d4;box-sizing:border-box;z-index:4;"></div>
<svg style="position:absolute;left:1386px;top:45px;z-index:6;overflow:visible" width="8" height="5" viewBox="0 0 8 5"><path d="M1 4 L4 1 L7 4" stroke="#bbb" stroke-width="1" fill="none"/></svg>
<svg style="position:absolute;left:1386px;top:65px;z-index:6;overflow:visible" width="8" height="5" viewBox="0 0 8 5"><path d="M1 1 L4 4 L7 1" stroke="#444" stroke-width="1.1" fill="none"/></svg>
<svg style="position:absolute;left:1386px;top:83px;z-index:6;overflow:visible" width="8" height="9" viewBox="0 0 8 9"><path d="M1 1 H7 M1 4 L4 7 L7 4" stroke="#444" stroke-width="1.1" fill="none"/></svg>
<svg style="position:absolute;left:1422.5px;top:43px;z-index:6;overflow:visible" width="30" height="23" viewBox="0 0 30 23"><rect x="0.5" y="0.5" width="27.5" height="21" fill="#fff" stroke="#333" stroke-width="1.1"/><path d="M0.5 7.5 H28 M0.5 14.5 H28 M10 0.5 V22 M19 0.5 V22" stroke="#333" stroke-width="1"/><rect x="3" y="7.5" width="27" height="7" fill="#5aa0e6" opacity="0.9"/><path d="M0 11 L5 6.5 L5 15.5 Z" fill="#3a90b0"/></svg>
<svg style="position:absolute;left:1465px;top:43px;z-index:6;overflow:visible" width="30" height="23" viewBox="0 0 30 23"><rect x="0.5" y="0.5" width="27.5" height="21" fill="#fff" stroke="#333" stroke-width="1.1"/><path d="M0.5 7.5 H28 M0.5 14.5 H28 M10 0.5 V22 M19 0.5 V22" stroke="#333" stroke-width="1"/><rect x="2" y="7.5" width="17" height="7" fill="#5aa0e6" opacity="0.9"/><path d="M19 7.5 L23 11 L19 14.5 Z" fill="#5aa0e6"/><path d="M18 4 L28 16 M28 4 L18 16" stroke="#e86a6a" stroke-width="1.3"/></svg>
<svg style="position:absolute;left:1507px;top:43px;z-index:6;overflow:visible" width="30" height="23" viewBox="0 0 30 23"><rect x="7" y="7.5" width="13.5" height="7" fill="#5aa0e6"/><rect x="0.5" y="0.5" width="27.5" height="21" fill="none" stroke="#333" stroke-width="1.1"/><path d="M0.5 7.5 H28 M0.5 14.5 H28 M7 0.5 V22 M20.5 0.5 V22" stroke="#333" stroke-width="1"/><path d="M6 -4 H22 M6 -6 V-2 M22 -6 V-2" stroke="#4a90d9" stroke-width="1.1"/></svg>
<div style="position:absolute;left:1420.00px;top:75.47px;font:400 12.5px/1 'Liberation Sans',sans-serif;color:#262626;white-space:pre;z-index:5;transform:scaleX(1.0236);transform-origin:left;">Insert</div>
<div style="position:absolute;left:1462.00px;top:75.47px;font:400 12.5px/1 'Liberation Sans',sans-serif;color:#262626;white-space:pre;z-index:5;transform:scaleX(0.9133);transform-origin:left;">Delete</div>
<div style="position:absolute;left:1502.00px;top:75.47px;font:400 12.5px/1 'Liberation Sans',sans-serif;color:#262626;white-space:pre;z-index:5;transform:scaleX(0.9599);transform-origin:left;">Format</div>
<svg style="position:absolute;left:1432.5px;top:94px;z-index:6;overflow:visible" width="7" height="4" viewBox="0 0 7 4"><path d="M0.5 0.5 L3.5 3.5 L6.5 0.5" stroke="#555" stroke-width="1" fill="none"/></svg>
<svg style="position:absolute;left:1474.5px;top:94px;z-index:6;overflow:visible" width="7" height="4" viewBox="0 0 7 4"><path d="M0.5 0.5 L3.5 3.5 L6.5 0.5" stroke="#555" stroke-width="1" fill="none"/></svg>
<svg style="position:absolute;left:1516.5px;top:94px;z-index:6;overflow:visible" width="7" height="4" viewBox="0 0 7 4"><path d="M0.5 0.5 L3.5 3.5 L6.5 0.5" stroke="#555" stroke-width="1" fill="none"/></svg>
<div style="position:absolute;left:1563.00px;top:39.27px;font:400 15px/1 'Liberation Sans',sans-serif;color:#262626;white-space:pre;z-index:5;transform:scaleX(1.2939);transform-origin:left;">Σ</div>
<div style="position:absolute;left:1581.00px;top:40.98px;font:400 12.5px/1 'Liberation Sans',sans-serif;color:#262626;white-space:pre;z-index:5;transform:scaleX(0.9725);transform-origin:left;">AutoSum</div>
<svg style="position:absolute;left:1641px;top:45px;z-index:6;overflow:visible" width="7" height="4" viewBox="0 0 7 4"><path d="M0.5 0.5 L3.5 3.5 L6.5 0.5" stroke="#555" stroke-width="1" fill="none"/></svg>
<svg style="position:absolute;left:1562px;top:62px;z-index:6;overflow:visible" width="15" height="14" viewBox="0 0 15 14"><rect x="0.5" y="0.5" width="14" height="13" fill="#fff" stroke="#444"/><path d="M7.5 3 V10 M5 7.5 L7.5 10 L10 7.5" stroke="#3a7bd5" stroke-width="1.2" fill="none"/></svg>
<div style="position:absolute;left:1581.00px;top:63.48px;font:400 12.5px/1 'Liberation Sans',sans-serif;color:#262626;white-space:pre;z-index:5;">Fill</div>
<svg style="position:absolute;left:1600px;top:68px;z-index:6;overflow:visible" width="7" height="4" viewBox="0 0 7 4"><path d="M0.5 0.5 L3.5 3.5 L6.5 0.5" stroke="#555" stroke-width="1" fill="none"/></svg>
<svg style="position:absolute;left:1562px;top:84px;z-index:6;overflow:visible" width="15" height="15" viewBox="0 0 15 15"><path d="M1 9 L8 2 L14 8 L7 15 Z" fill="#fff" stroke="#b05cc8" stroke-width="1.5"/><path d="M1 9 L4.5 5.5 L10.5 11.5 L7 15 Z" fill="#c77ddb"/></svg>
<div style="position:absolute;left:1581.00px;top:86.47px;font:400 12.5px/1 'Liberation Sans',sans-serif;color:#262626;white-space:pre;z-index:5;transform:scaleX(0.9708);transform-origin:left;">Clear</div>
<svg style="position:absolute;left:1612px;top:91px;z-index:6;overflow:visible" width="7" height="4" viewBox="0 0 7 4"><path d="M0.5 0.5 L3.5 3.5 L6.5 0.5" stroke="#555" stroke-width="1" fill="none"/></svg>
<svg style="position:absolute;left:1660px;top:40px;z-index:6;overflow:visible" width="32" height="28" viewBox="0 0 32 28"><text x="0" y="13" font-size="13" font-family="Liberation Sans" fill="#3a7bd5">A</text><text x="0" y="27" font-size="13" font-family="Liberation Sans" fill="#444">Z</text><path d="M12 9 H29 L22.5 17 V25 L18.5 23 V17 Z" fill="none" stroke="#444" stroke-width="1.3"/></svg>
<div style="position:absolute;left:1658.00px;top:75.47px;font:400 12.5px/1 'Liberation Sans',sans-serif;color:#262626;white-space:pre;z-index:5;transform:scaleX(0.9500);transform-origin:left;">Sort &amp;</div>
<div style="position:absolute;left:1656.00px;top:90.47px;font:400 12.5px/1 'Liberation Sans',sans-serif;color:#262626;white-space:pre;z-index:5;transform:scaleX(1.0440);transform-origin:left;">Filter</div>
<svg style="position:absolute;left:1687px;top:94px;z-index:6;overflow:visible" width="7" height="4" viewBox="0 0 7 4"><path d="M0.5 0.5 L3.5 3.5 L6.5 0.5" stroke="#555" stroke-width="1" fill="none"/></svg>
<svg style="position:absolute;left:1704px;top:39px;z-index:6;overflow:visible" width="30" height="30" viewBox="0 0 30 30"><circle cx="17.5" cy="11.5" r="9.5" fill="none" stroke="#444" stroke-width="1.4"/><path d="M11 18.5 L1 28.5" stroke="#444" stroke-width="1.4"/></svg>
<div style="position:absolute;left:1701.00px;top:75.47px;font:400 12.5px/1 'Liberation Sans',sans-serif;color:#262626;white-space:pre;z-index:5;">Find &amp;</div>
<div style="position:absolute;left:1697.00px;top:90.47px;font:400 12.5px/1 'Liberation Sans',sans-serif;color:#262626;white-space:pre;z-index:5;transform:scaleX(0.9786);transform-origin:left;">Select</div>
<svg style="position:absolute;left:1734px;top:94px;z-index:6;overflow:visible" width="7" height="4" viewBox="0 0 7 4"><path d="M0.5 0.5 L3.5 3.5 L6.5 0.5" stroke="#555" stroke-width="1" fill="none"/></svg>
<svg style="position:absolute;left:1768px;top:39px;z-index:6;overflow:visible" width="24" height="30" viewBox="0 0 24 30"><path d="M12 1 L22 1 L15 12 L21 12 L5 29 L10 16 L4 16 Z" fill="#3a8fe0"/></svg>
<div style="position:absolute;left:1766.00px;top:75.47px;font:400 12.5px/1 'Liberation Sans',sans-serif;color:#262626;white-space:pre;z-index:5;transform:scaleX(0.8829);transform-origin:left;">Ideas</div>
<svg style="position:absolute;left:1834px;top:38px;z-index:6;overflow:visible" width="30" height="30" viewBox="0 0 30 30"><rect x="2" y="6" width="20" height="22" fill="#f5f5f5" stroke="#bdbdbd" stroke-width="1.3"/><path d="M6 20 L18 8 L24 14 L12 26 Z" fill="#cfcfcf"/><circle cx="23" cy="7" r="5" fill="none" stroke="#c8c8c8" stroke-width="2"/></svg>
<div style="position:absolute;left:1819.00px;top:75.47px;font:400 12.5px/1 'Liberation Sans',sans-serif;color:#a6a6a6;white-space:pre;z-index:5;transform:scaleX(0.9419);transform-origin:left;">Sensitivity</div>
<svg style="position:absolute;left:1842px;top:94px;z-index:6;overflow:visible" width="7" height="4" viewBox="0 0 7 4"><path d="M0.5 0.5 L3.5 3.5 L6.5 0.5" stroke="#bbb" stroke-width="1" fill="none"/></svg>
<svg style="position:absolute;left:1900px;top:118px;z-index:6;overflow:visible" width="12" height="7" viewBox="0 0 12 7"><path d="M1 6 L6 1 L11 6" stroke="#444" stroke-width="1.4" fill="none"/></svg>
<div style="position:absolute;left:0.00px;top:957.50px;width:1920.00px;height:28.50px;background:#e6e6e6;z-index:2;"></div>
<div style="position:absolute;left:0.00px;top:957.50px;width:1920.00px;height:1.00px;background:#c6c6c6;z-index:3;"></div>
<svg style="position:absolute;left:26px;top:966px;z-index:6;overflow:visible" width="6" height="9" viewBox="0 0 6 9"><path d="M5 0 L0 4.5 L5 9 Z" fill="#d0d0d0"/></svg>
<svg style="position:absolute;left:55px;top:966px;z-index:6;overflow:visible" width="6" height="9" viewBox="0 0 6 9"><path d="M0 0 L5 4.5 L0 9 Z" fill="#d0d0d0"/></svg>
<div style="position:absolute;left:99.00px;top:960.00px;width:1.00px;height:23.00px;background:#cfcfcf;z-index:3;"></div>
<div style="position:absolute;left:103.00px;top:960.80px;width:72.00px;height:21.90px;background:#ff0000;z-index:3;"></div>
<div style="position:absolute;left:112.26px;top:965.48px;font:400 12.5px/1 'Liberation Sans',sans-serif;color:#fff;white-space:pre;z-index:6;transform:scaleX(0.9536);transform-origin:center;">README</div>
<div style="position:absolute;left:178.00px;top:960.00px;width:1.00px;height:23.00px;background:#cfcfcf;z-index:3;"></div>
<div style="position:absolute;left:192.00px;top:965.48px;font:400 12.5px/1 'Liberation Sans',sans-serif;color:#444;white-space:pre;z-index:5;transform:scaleX(1.0440);transform-origin:left;">Property Analyzer</div>
<div style="position:absolute;left:311.50px;top:957.50px;width:148.50px;height:25.50px;background:#fff;z-index:3;"></div>
<div style="position:absolute;left:311.00px;top:957.50px;width:1.00px;height:25.50px;background:#b8b8b8;z-index:4;"></div>
<div style="position:absolute;left:459.50px;top:957.50px;width:1.00px;height:25.50px;background:#b8b8b8;z-index:4;"></div>
<div style="position:absolute;left:311.50px;top:981.00px;width:148.50px;height:2.00px;background:#217346;z-index:4;"></div>
<div style="position:absolute;left:323.00px;top:965.48px;font:700 12.5px/1 'Liberation Sans',sans-serif;color:#217346;white-space:pre;z-index:6;transform:scaleX(1.0200);transform-origin:left;">Investment Forecast</div>
<div style="position:absolute;left:476.00px;top:965.48px;font:400 12.5px/1 'Liberation Sans',sans-serif;color:#444;white-space:pre;z-index:5;transform:scaleX(1.0162);transform-origin:left;">Investment Summary</div>
<div style="position:absolute;left:613.50px;top:960.00px;width:1.00px;height:23.00px;background:#b8b8b8;z-index:3;"></div>
<svg style="position:absolute;left:647px;top:963px;z-index:6;overflow:visible" width="16" height="16" viewBox="0 0 16 16"><circle cx="8" cy="8" r="7" fill="none" stroke="#666" stroke-width="1.2"/><path d="M8 4 V12 M4 8 H12" stroke="#666" stroke-width="1.3"/></svg>
<div style="position:absolute;left:1151.00px;top:965.00px;width:2.00px;height:1.50px;background:#aaa;z-index:3;"></div>
<div style="position:absolute;left:1151.00px;top:969.00px;width:2.00px;height:1.50px;background:#aaa;z-index:3;"></div>
<div style="position:absolute;left:1151.00px;top:973.00px;width:2.00px;height:1.50px;background:#aaa;z-index:3;"></div>
<div style="position:absolute;left:1169.00px;top:963.50px;width:688.00px;height:16.00px;background:#fff;border:1px solid #c6c6c6;box-sizing:border-box;z-index:3;"></div>
<div style="position:absolute;left:1169.00px;top:963.50px;width:15.00px;height:16.00px;background:#fff;border:1px solid #c6c6c6;box-sizing:border-box;z-index:4;"></div>
<svg style="position:absolute;left:1173px;top:967px;z-index:6;overflow:visible" width="6" height="9" viewBox="0 0 6 9"><path d="M5 0 L0 4.5 L5 9 Z" fill="#555"/></svg>
<div style="position:absolute;left:1885.00px;top:963.50px;width:14.00px;height:16.00px;background:#fff;border:1px solid #c6c6c6;box-sizing:border-box;z-index:4;"></div>
<svg style="position:absolute;left:1889px;top:967px;z-index:6;overflow:visible" width="6" height="9" viewBox="0 0 6 9"><path d="M0 0 L5 4.5 L0 9 Z" fill="#555"/></svg>
<div style="position:absolute;left:0.00px;top:986.00px;width:1920.00px;height:21.00px;background:#f3f3f3;z-index:2;"></div>
<div style="position:absolute;left:0.00px;top:1007.00px;width:1920.00px;height:2.00px;background:#1a1a1a;z-index:3;"></div>
<div style="position:absolute;left:1620.00px;top:987.00px;width:39.00px;height:19.00px;background:#c8c8c8;z-index:3;"></div>
<svg style="position:absolute;left:1632px;top:990px;z-index:6;overflow:visible" width="14" height="14" viewBox="0 0 14 14"><path d="M0.5 0.5 H13.5 V13.5 H0.5 Z M0.5 4.8 H13.5 M0.5 9.2 H13.5 M4.8 0.5 V13.5 M9.2 0.5 V13.5" stroke="#333" stroke-width="1" fill="none"/></svg>
<svg style="position:absolute;left:1673px;top:990px;z-index:6;overflow:visible" width="14" height="14" viewBox="0 0 14 14"><path d="M0.5 0.5 H13.5 V13.5 H0.5 Z" stroke="#444" fill="none"/><path d="M3 3 H11 V11 H3 Z M4 5 H10 M4 7 H10 M4 9 H10" stroke="#555" stroke-width="0.8" fill="none"/></svg>
<svg style="position:absolute;left:1713px;top:990px;z-index:6;overflow:visible" width="14" height="14" viewBox="0 0 14 14"><path d="M0.5 0.5 H13.5 V13.5 H0.5 Z M0.5 7 H13.5 M7 0.5 V7" stroke="#444" fill="none"/></svg>
<div style="position:absolute;left:1745.00px;top:996.00px;width:10.00px;height:1.30px;background:#444;z-index:4;"></div>
<div style="position:absolute;left:1760.00px;top:996.00px;width:98.00px;height:1.00px;background:#bdbdbd;z-index:4;"></div>
<div style="position:absolute;left:1809.00px;top:991.00px;width:4.00px;height:10.00px;background:#666;z-index:5;"></div>
<div style="position:absolute;left:1862.00px;top:996.00px;width:10.00px;height:1.30px;background:#444;z-index:4;"></div>
<div style="position:absolute;left:1866.50px;top:991.00px;width:1.30px;height:10.00px;background:#444;z-index:4;"></div>
<div style="position:absolute;left:1886.00px;top:990.46px;font:400 11.5px/1 'Liberation Sans',sans-serif;color:#444;white-space:pre;z-index:5;transform:scaleX(0.9104);transform-origin:left;">115%</div>
<svg style="position:absolute;left:1890.9px;top:469px;z-index:8;overflow:visible" width="36.6" height="36.6" viewBox="0 0 36.6 36.6"><circle cx="18.3" cy="18.3" r="18.3" fill="#0f6fe6"/><g fill="#fff"><path d="M7 12 L12.5 8.5 L18 12 L12.5 15.5 Z"/><path d="M18.6 12 L24.1 8.5 L29.6 12 L24.1 15.5 Z"/><path d="M7 19 L12.5 15.5 L18 19 L12.5 22.5 Z"/><path d="M18.6 19 L24.1 15.5 L29.6 19 L24.1 22.5 Z"/><path d="M12.8 24.2 L18.3 20.7 L23.8 24.2 L18.3 27.7 Z"/></g></svg>
</body></html>
